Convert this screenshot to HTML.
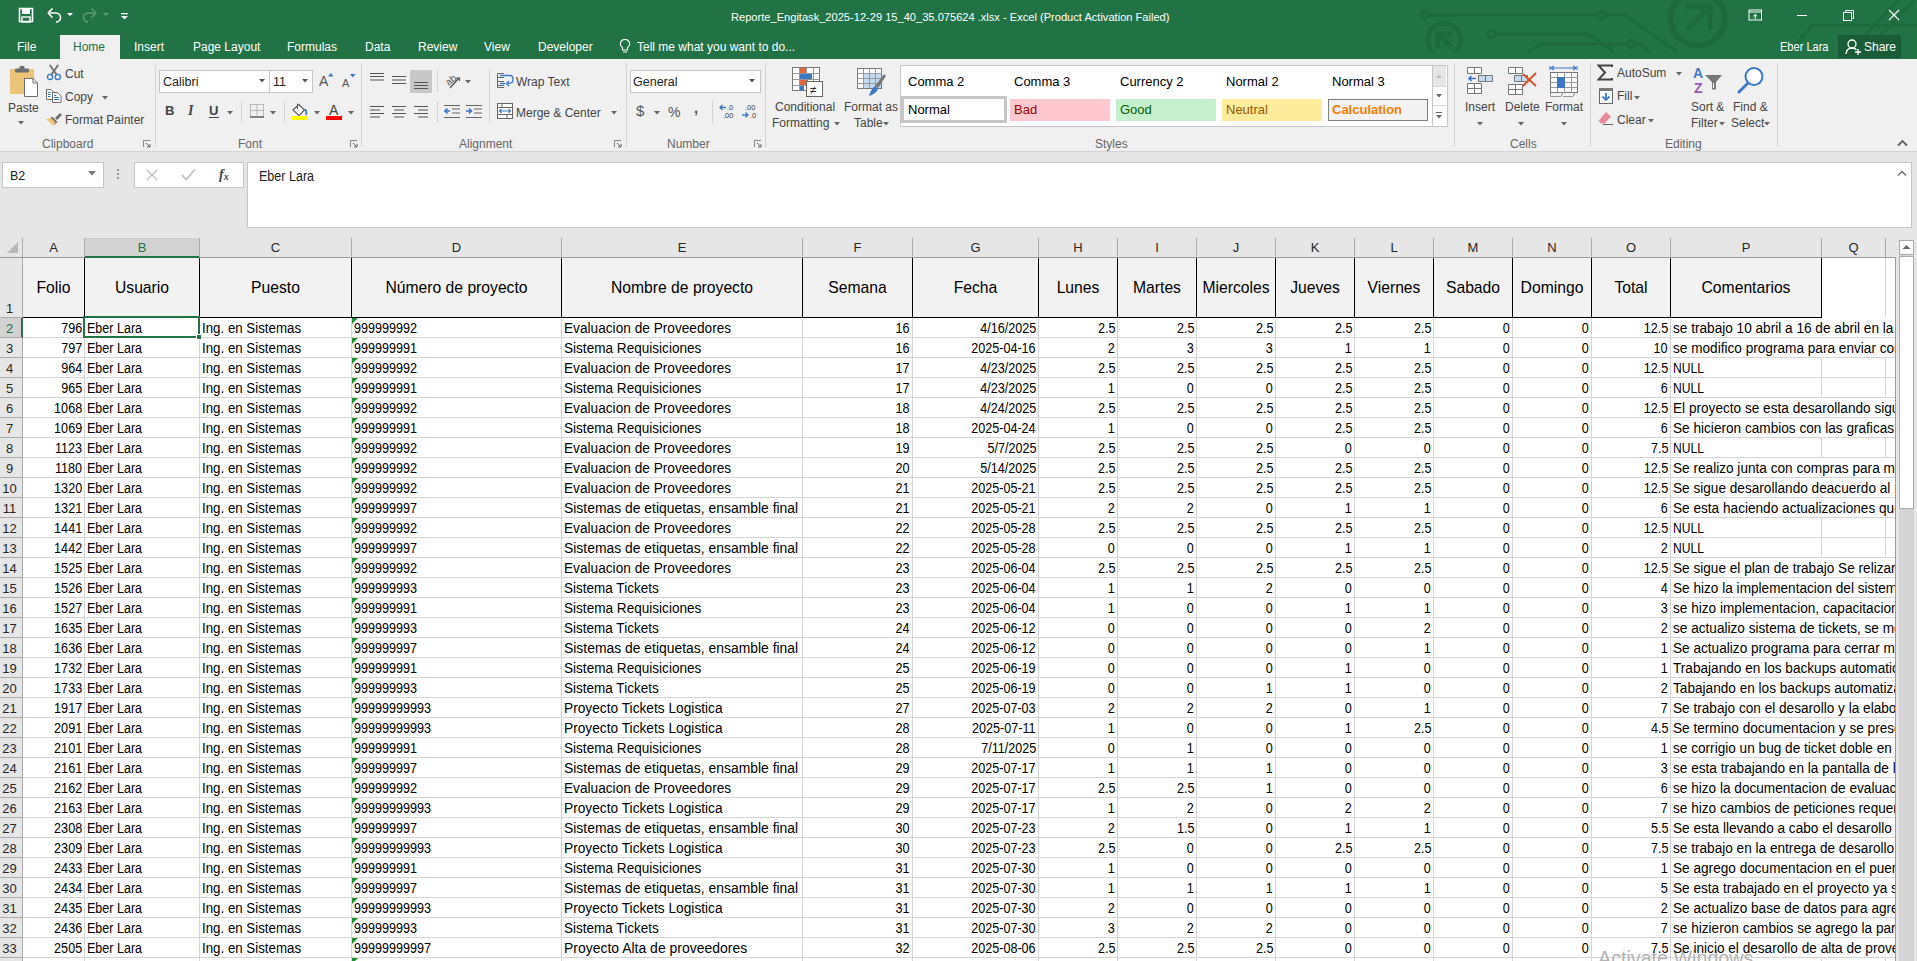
<!DOCTYPE html>
<html><head><meta charset="utf-8">
<style>
*{margin:0;padding:0;box-sizing:content-box}
html,body{width:1917px;height:961px;overflow:hidden;background:#E6E6E6;font-family:"Liberation Sans",sans-serif}
.a{position:absolute}
.t{position:absolute;white-space:nowrap;font-size:12px;line-height:14px;color:#444}
.w{color:#fff}
.c{position:absolute;height:19px;line-height:20px;font-size:14px;color:#000;white-space:nowrap;overflow:visible}
.c span{display:inline-block}
.c.r{text-align:right}
.hl{position:absolute;left:23px;width:1872px;height:1px;background:#D4D4D4}
.vl{position:absolute;width:1px;background:#D4D4D4}
.ch{position:absolute;top:238px;height:19px;line-height:20px;text-align:center;font-size:13px;color:#444}
.rh{position:absolute;left:0;width:19px;text-align:center;font-size:13px}
.hd{position:absolute;top:258px;height:59px;line-height:60px;text-align:center;font-size:15.7px;color:#000;white-space:nowrap}
.tri{position:absolute}
.sep{position:absolute;width:1px;background:#D5D5D5}
.gl{position:absolute;top:137px;font-size:12px;line-height:14px;color:#666;white-space:nowrap}
</style></head><body>
<!-- TITLE BAR -->
<div class="a" style="left:0;top:0;width:1917px;height:59px;background:#217346"></div>
<svg class="a" style="left:1400px;top:0" width="517" height="52">
 <g stroke="#1D6A3F" stroke-width="3" fill="none">
  <path d="M25 15 H225 L277 52"/>
  <circle cx="25" cy="15" r="3.5" fill="#217346"/>
  <circle cx="202" cy="15" r="3.5" fill="#217346"/>
  <path d="M91 34 H188 L214 52"/>
  <circle cx="91" cy="34" r="3.5" fill="#217346"/>
  <path d="M128 52 L141 44 H240 L250 52"/>
  <circle cx="231" cy="44" r="3.5" fill="#217346"/>
  <circle cx="44" cy="40" r="16.5" stroke-width="5"/>
  <path d="M37.5 48 V34 H52 M38 34 L51 47" stroke-width="5"/>
  <circle cx="297.5" cy="18.5" r="27" stroke-width="6"/>
  <path d="M285.5 6.5 H310 V30 M310 6.5 L287 29.5" stroke-width="5"/>
  <path d="M389 52 L413 25 H517"/>
  <path d="M450 52 L498 0"/>
  <path d="M465 52 L514 0"/>
 </g>
</svg>
<!-- QAT -->
<svg class="a" style="left:18px;top:7px" width="16" height="16"><path d="M1.5 1.5 H14.5 V14.5 H1.5 Z" fill="none" stroke="#fff" stroke-width="1.6"/><rect x="4" y="2" width="8" height="5" fill="#fff"/><rect x="4" y="10" width="8" height="5" fill="none" stroke="#fff" stroke-width="1.4"/></svg>
<svg class="a" style="left:46px;top:7px" width="30" height="16"><path d="M3 6 H10 A4.5 4.5 0 0 1 10 15" fill="none" stroke="#fff" stroke-width="1.6"/><path d="M2 6 L6.5 1.5 M2 6 L6.5 10.5" stroke="#fff" stroke-width="1.6" fill="none"/><path d="M21 6 h6 l-3 3z" fill="#fff"/></svg>
<svg class="a" style="left:81px;top:7px" width="30" height="16"><path d="M14 6 H7 A4.5 4.5 0 0 0 7 15" fill="none" stroke="#5C9A76" stroke-width="1.6"/><path d="M15 6 L10.5 1.5 M15 6 L10.5 10.5" stroke="#5C9A76" stroke-width="1.6" fill="none"/><path d="M22 6 h6 l-3 3z" fill="#5C9A76"/></svg>
<svg class="a" style="left:120px;top:12px" width="10" height="10"><rect x="1" y="1" width="7" height="1.3" fill="#fff"/><path d="M1 4 h7 l-3.5 3.5z" fill="#fff"/></svg>
<div class="t w" style="left:731px;top:10px;font-size:11.1px;line-height:14px">Reporte_Engitask_2025-12-29 15_40_35.075624 .xlsx - Excel (Product Activation Failed)</div>
<!-- window controls -->
<svg class="a" style="left:1748px;top:9px" width="15" height="13"><rect x="1" y="1" width="12.5" height="10" fill="none" stroke="#fff" stroke-width="1"/><path d="M1 3 H13.5" stroke="#fff"/><path d="M7.25 10 V5.5 M5.3 7.3 L7.25 5.5 L9.2 7.3" stroke="#fff" fill="none"/></svg>
<div class="a" style="left:1797px;top:15px;width:10px;height:1px;background:#fff"></div>
<svg class="a" style="left:1843px;top:10px" width="11" height="11"><rect x="0.5" y="2.5" width="8" height="8" fill="none" stroke="#fff"/><path d="M2.5 2.5 V0.5 H10.5 V8.5 H8.5" fill="none" stroke="#fff"/></svg>
<svg class="a" style="left:1888px;top:9px" width="12" height="12"><path d="M1 1 L11 11 M11 1 L1 11" stroke="#fff" stroke-width="1.1"/></svg>
<div class="t w" style="left:1780px;top:40px;font-size:12px"><span style="display:inline-block;transform:scaleX(0.92);transform-origin:0 0">Eber Lara</span></div>
<div class="a" style="left:1838px;top:35px;width:63px;height:23px;background:#1A5C37"></div>
<svg class="a" style="left:1845px;top:38px" width="18" height="18"><circle cx="7" cy="6" r="4" fill="none" stroke="#fff" stroke-width="1.3"/><path d="M1 16 C1.5 11 4 10 7 10 C9 10 10.5 10.5 11.5 12" fill="none" stroke="#fff" stroke-width="1.3"/><path d="M13 11 V17 M10 14 H16" stroke="#fff" stroke-width="1.3"/></svg>
<div class="t w" style="left:1864px;top:40px;font-size:12px">Share</div>
<!-- TABS -->
<div class="a" style="left:60px;top:35px;width:60px;height:24px;background:#F0F0F0"></div>
<div class="t w" style="left:17px;top:40px;font-size:12px">File</div>
<div class="t" style="left:73px;top:40px;font-size:12px;color:#217346">Home</div>
<div class="t w" style="left:134px;top:40px;font-size:12px">Insert</div>
<div class="t w" style="left:193px;top:40px;font-size:12px">Page Layout</div>
<div class="t w" style="left:287px;top:40px;font-size:12px">Formulas</div>
<div class="t w" style="left:365px;top:40px;font-size:12px">Data</div>
<div class="t w" style="left:418px;top:40px;font-size:12px">Review</div>
<div class="t w" style="left:484px;top:40px;font-size:12px">View</div>
<div class="t w" style="left:538px;top:40px;font-size:12px">Developer</div>
<svg class="a" style="left:619px;top:38px" width="12" height="16"><path d="M6 1.5 A4.3 4.3 0 0 1 8.5 9.5 V12 H3.5 V9.5 A4.3 4.3 0 0 1 6 1.5 Z" fill="none" stroke="#fff" stroke-width="1.1"/><path d="M4 14 H8" stroke="#fff"/></svg>
<div class="t w" style="left:637px;top:40px;font-size:12px">Tell me what you want to do...</div>
<!-- RIBBON -->
<div class="a" style="left:0;top:59px;width:1917px;height:92px;background:#F0F0F0"></div>
<div class="a" style="left:0;top:151px;width:1917px;height:1px;background:#D4D4D4"></div>
<!-- separators -->
<div class="sep" style="left:155px;top:63px;height:84px"></div>
<div class="sep" style="left:361px;top:63px;height:84px"></div>
<div class="sep" style="left:626px;top:63px;height:84px"></div>
<div class="sep" style="left:765px;top:63px;height:84px"></div>
<div class="sep" style="left:1454px;top:63px;height:84px"></div>
<div class="sep" style="left:1590px;top:63px;height:84px"></div>
<div class="sep" style="left:1777px;top:63px;height:84px"></div>
<!-- group labels -->
<div class="gl" style="left:42px">Clipboard</div>
<div class="gl" style="left:238px">Font</div>
<div class="gl" style="left:459px">Alignment</div>
<div class="gl" style="left:667px">Number</div>
<div class="gl" style="left:1095px">Styles</div>
<div class="gl" style="left:1510px">Cells</div>
<div class="gl" style="left:1665px">Editing</div>
<!-- launchers -->
<svg class="a" style="left:143px;top:140px" width="8" height="8"><path d="M0.5 7 V0.5 H7" fill="none" stroke="#888"/><path d="M3 3 L7 7 M7 4 V7 H4" fill="none" stroke="#666"/></svg>
<svg class="a" style="left:350px;top:140px" width="8" height="8"><path d="M0.5 7 V0.5 H7" fill="none" stroke="#888"/><path d="M3 3 L7 7 M7 4 V7 H4" fill="none" stroke="#666"/></svg>
<svg class="a" style="left:614px;top:140px" width="8" height="8"><path d="M0.5 7 V0.5 H7" fill="none" stroke="#888"/><path d="M3 3 L7 7 M7 4 V7 H4" fill="none" stroke="#666"/></svg>
<svg class="a" style="left:754px;top:140px" width="8" height="8"><path d="M0.5 7 V0.5 H7" fill="none" stroke="#888"/><path d="M3 3 L7 7 M7 4 V7 H4" fill="none" stroke="#666"/></svg>
<!-- CLIPBOARD -->
<svg class="a" style="left:9px;top:66px" width="30" height="32">
 <rect x="1" y="3" width="24" height="25" rx="1" fill="#EBC47A"/>
 <rect x="6" y="2.5" width="14" height="4" rx="1" fill="#6E6E6E"/>
 <rect x="10.5" y="0" width="5" height="4" rx="1" fill="#6E6E6E"/>
 <path d="M15.5 12.5 H24 L28.5 17 V30.5 H15.5 Z" fill="#fff" stroke="#6E6E6E" stroke-width="1"/>
 <path d="M24 12.5 V17 H28.5" fill="none" stroke="#6E6E6E" stroke-width="1"/>
</svg>
<div class="t" style="left:8px;top:101px">Paste</div>
<svg class="a" style="left:18px;top:121px" width="7" height="5"><path d="M0 0 H6 L3 3.5Z" fill="#666"/></svg>
<svg class="a" style="left:45px;top:64px" width="17" height="17"><path d="M5.2 1.5 L11.5 10.5 M12.8 1.5 L6.5 10.5" stroke="#6E6E6E" stroke-width="1.8" stroke-linecap="round"/><circle cx="5" cy="12.9" r="2.6" fill="none" stroke="#3C78C8" stroke-width="1.3"/><circle cx="12.8" cy="12.9" r="2.6" fill="none" stroke="#3C78C8" stroke-width="1.3"/></svg>
<div class="t" style="left:65px;top:67px">Cut</div>
<svg class="a" style="left:45px;top:88px" width="17" height="16"><path d="M1.5 1.5 H6 L8 3.5 V11.5 H1.5 Z" fill="#fff" stroke="#6E6E6E"/><path d="M7.5 4.5 H12.5 L16 8 V14.5 H7.5 Z" fill="#fff" stroke="#6E6E6E"/><path d="M3 4.5 H5.5 M3 6.5 H5.5 M3 8.5 H5.5" stroke="#3C78C8"/><path d="M9 7.5 H11 M9 9.5 H14 M9 11.5 H14" stroke="#3C78C8"/></svg>
<div class="t" style="left:65px;top:90px">Copy</div>
<svg class="a" style="left:102px;top:96px" width="7" height="5"><path d="M0 0 H6 L3 3.5Z" fill="#666"/></svg>
<svg class="a" style="left:45px;top:111px" width="18" height="16"><path d="M10 7 L15 2 L17 4 L12 9 Z" fill="#6E6E6E"/><path d="M7 5.5 L12.5 11 L10 13.5 L4.5 8 Z" fill="#6E6E6E"/><path d="M1 8 L6 7 L10.5 11.5 L8.5 15 Z" fill="#EBC47A"/></svg>
<div class="t" style="left:65px;top:113px">Format Painter</div>
<!-- FONT -->
<div class="a" style="left:159px;top:70px;width:109px;height:21px;background:#fff;border:1px solid #C6C6C6"></div>
<div class="a" style="left:269px;top:70px;width:42px;height:21px;background:#fff;border:1px solid #C6C6C6"></div>
<div class="t" style="left:163px;top:75px;color:#222;font-size:12.5px">Calibri</div>
<div class="t" style="left:273px;top:75px;color:#222;font-size:12.5px">11</div>
<svg class="a" style="left:259px;top:79px" width="7" height="5"><path d="M0 0 H6 L3 3.5Z" fill="#555"/></svg>
<svg class="a" style="left:302px;top:79px" width="7" height="5"><path d="M0 0 H6 L3 3.5Z" fill="#555"/></svg>
<div class="t" style="left:319px;top:73px;font-size:14px;line-height:16px;color:#555">A</div>
<svg class="a" style="left:328px;top:73px" width="6" height="4"><path d="M0 3.5 H5.5 L2.75 0Z" fill="#3C78C8"/></svg>
<div class="t" style="left:342px;top:76px;font-size:11px;line-height:14px;color:#555">A</div>
<svg class="a" style="left:350px;top:74px" width="6" height="4"><path d="M0 0 H5.5 L2.75 3.5Z" fill="#3C78C8"/></svg>
<div class="t" style="left:165px;top:104px;font-size:13px;font-weight:bold;color:#444">B</div>
<div class="t" style="left:188px;top:104px;font-family:'Liberation Serif',serif;font-size:14px;font-style:italic;font-weight:bold;color:#444">I</div>
<div class="t" style="left:209px;top:104px;font-size:13px;font-weight:bold;color:#444">U</div>
<div class="a" style="left:209px;top:117px;width:10px;height:1px;background:#444"></div>
<svg class="a" style="left:227px;top:111px" width="7" height="5"><path d="M0 0 H6 L3 3.5Z" fill="#666"/></svg>
<div class="sep" style="left:241px;top:101px;height:22px"></div>
<svg class="a" style="left:250px;top:104px" width="14" height="14"><path d="M0.5 0.5 H13.5 V12.5 M0.5 0.5 V12.5 M7 0.5 V12.5 M0.5 6.5 H13.5" stroke="#888" stroke-dasharray="1 1" fill="none"/><path d="M0 13 H14" stroke="#444" stroke-width="1.3"/></svg>
<svg class="a" style="left:270px;top:111px" width="7" height="5"><path d="M0 0 H6 L3 3.5Z" fill="#666"/></svg>
<div class="sep" style="left:284px;top:101px;height:22px"></div>
<svg class="a" style="left:292px;top:103px" width="17" height="14"><path d="M1 7 L7 1.5 L12.5 7 L7 12.5 Z" fill="#fff" stroke="#555" stroke-width="1.1"/><path d="M5.5 0.5 V6" stroke="#555"/><path d="M13 6 Q15.5 9 14 12" fill="none" stroke="#3C78C8" stroke-width="1.6"/></svg>
<div class="a" style="left:292px;top:116px;width:16px;height:4px;background:#FFFF00"></div>
<svg class="a" style="left:314px;top:111px" width="7" height="5"><path d="M0 0 H6 L3 3.5Z" fill="#666"/></svg>
<div class="t" style="left:329px;top:103px;font-size:14px;line-height:14px;color:#444">A</div>
<div class="a" style="left:326px;top:116px;width:16px;height:4px;background:#FF0000"></div>
<svg class="a" style="left:348px;top:111px" width="7" height="5"><path d="M0 0 H6 L3 3.5Z" fill="#666"/></svg>
<!-- ALIGNMENT -->
<svg class="a" style="left:370px;top:72px" width="16" height="10"><path d="M0 1.5 H14 M0 4.5 H14 M0 8 H14" stroke="#555" stroke-width="1.1"/></svg>
<svg class="a" style="left:392px;top:75px" width="16" height="10"><path d="M0 1.5 H14 M0 5 H14 M0 8.5 H14" stroke="#555" stroke-width="1.1"/></svg>
<div class="a" style="left:410px;top:70px;width:22px;height:23px;background:#C8C8C8"></div>
<svg class="a" style="left:414px;top:81px" width="16" height="10"><path d="M0 1.5 H14 M0 4.5 H14 M0 7.5 H14" stroke="#555" stroke-width="1.1"/></svg>
<div class="sep" style="left:437px;top:70px;height:22px"></div>
<svg class="a" style="left:444px;top:72px" width="18" height="17"><text x="1" y="12" font-size="10" font-family="Liberation Sans" fill="#555" transform="rotate(-40 6 8)">ab</text><path d="M6 16 L15 6 M12 6 H15.5 V9" stroke="#555" stroke-width="1.2" fill="none"/></svg>
<svg class="a" style="left:465px;top:80px" width="7" height="5"><path d="M0 0 H6 L3 3.5Z" fill="#666"/></svg>
<div class="sep" style="left:489px;top:69px;height:54px"></div>
<svg class="a" style="left:497px;top:72px" width="18" height="17"><path d="M0.5 1.5 H7 M0.5 5.5 H7 M0.5 9.5 H7 M0.5 13.5 H7 M0.5 1.5 V15.5 H7" stroke="#666" fill="none"/><path d="M3 3.5 H13 M3 11.5 H8" stroke="#3C78C8" stroke-width="1.3"/><path d="M13 3.5 Q16 3.5 16 7.5 Q16 11.5 11 11.5" stroke="#3C78C8" stroke-width="1.3" fill="none"/><path d="M12 9 L9.5 11.5 L12 14" stroke="#3C78C8" stroke-width="1.3" fill="none"/></svg>
<div class="t" style="left:516px;top:75px">Wrap Text</div>
<svg class="a" style="left:370px;top:105px" width="16" height="14"><path d="M0 1.5 H14 M0 5 H10 M0 8.5 H14 M0 12 H10" stroke="#555" stroke-width="1.1"/></svg>
<svg class="a" style="left:392px;top:105px" width="16" height="14"><path d="M0 1.5 H14 M2 5 H12 M0 8.5 H14 M2 12 H12" stroke="#555" stroke-width="1.1"/></svg>
<svg class="a" style="left:414px;top:105px" width="16" height="14"><path d="M0 1.5 H14 M4 5 H14 M0 8.5 H14 M4 12 H14" stroke="#555" stroke-width="1.1"/></svg>
<div class="sep" style="left:437px;top:101px;height:22px"></div>
<svg class="a" style="left:444px;top:104px" width="18" height="16"><path d="M0 1.5 H16 M8 5 H16 M8 9 H16 M0 13.5 H16" stroke="#666" stroke-width="1.1"/><path d="M1 7 H6 M3.5 4.5 L1 7 L3.5 9.5" stroke="#3C78C8" stroke-width="1.6" fill="none"/></svg>
<svg class="a" style="left:466px;top:104px" width="18" height="16"><path d="M0 1.5 H16 M8 5 H16 M8 9 H16 M0 13.5 H16" stroke="#666" stroke-width="1.1"/><path d="M0 7 H5.5 M3 4.5 L5.5 7 L3 9.5" stroke="#3C78C8" stroke-width="1.6" fill="none"/></svg>
<svg class="a" style="left:497px;top:103px" width="17" height="17"><rect x="0.5" y="0.5" width="15" height="15" fill="#fff" stroke="#666"/><path d="M0.5 4.5 H15.5 M0.5 11.5 H15.5 M5 0.5 V4.5 M10 11.5 V15.5" stroke="#666" fill="none"/><path d="M2.5 8 H13.5 M4.5 6 L2.5 8 L4.5 10 M11.5 6 L13.5 8 L11.5 10" stroke="#3C78C8" stroke-width="1.1" fill="none"/></svg>
<div class="t" style="left:516px;top:106px">Merge &amp; Center</div>
<svg class="a" style="left:611px;top:111px" width="7" height="5"><path d="M0 0 H6 L3 3.5Z" fill="#666"/></svg>
<!-- NUMBER -->
<div class="a" style="left:630px;top:70px;width:129px;height:21px;background:#fff;border:1px solid #C6C6C6"></div>
<div class="t" style="left:633px;top:75px;color:#222;font-size:12.5px">General</div>
<svg class="a" style="left:749px;top:79px" width="7" height="5"><path d="M0 0 H6 L3 3.5Z" fill="#555"/></svg>
<div class="t" style="left:636px;top:103px;font-size:15px;line-height:16px;color:#555">$</div>
<svg class="a" style="left:654px;top:111px" width="7" height="5"><path d="M0 0 H6 L3 3.5Z" fill="#666"/></svg>
<div class="t" style="left:668px;top:104px;font-size:14px;line-height:16px;color:#555">%</div>
<div class="t" style="left:694px;top:100px;font-size:15px;line-height:16px;font-weight:bold;color:#555">,</div>
<div class="sep" style="left:712px;top:101px;height:22px"></div>
<svg class="a" style="left:719px;top:103px" width="18" height="16"><text x="8" y="7" font-size="7.5" font-family="Liberation Sans" fill="#444">.0</text><text x="4" y="14.5" font-size="7.5" font-family="Liberation Sans" fill="#444">.00</text><path d="M1 4.5 H7 M3.5 2 L1 4.5 L3.5 7" stroke="#3C78C8" stroke-width="1.3" fill="none"/></svg>
<svg class="a" style="left:741px;top:103px" width="18" height="16"><text x="4" y="7" font-size="7.5" font-family="Liberation Sans" fill="#444">.00</text><text x="9" y="14.5" font-size="7.5" font-family="Liberation Sans" fill="#444">.0</text><path d="M1 12 H7 M4.5 9.5 L7 12 L4.5 14.5" stroke="#3C78C8" stroke-width="1.3" fill="none"/></svg>
<!-- STYLES -->
<svg class="a" style="left:791px;top:66px" width="33" height="32">
 <rect x="1.5" y="1.5" width="27" height="23" fill="#fff" stroke="#777"/>
 <path d="M1.5 7.5 H28.5 M1.5 13.5 H28.5 M1.5 19.5 H28.5 M8.5 1.5 V24.5 M15.5 1.5 V24.5 M22.5 1.5 V24.5" stroke="#999"/>
 <rect x="9" y="2" width="6" height="5" fill="#E06A3A"/>
 <rect x="9" y="8" width="12" height="5" fill="#3C78C8"/>
 <rect x="9" y="14" width="8" height="5" fill="#E06A3A"/>
 <rect x="9" y="20" width="4" height="4" fill="#3C78C8"/>
 <rect x="15.5" y="15.5" width="16" height="15" fill="#fff" stroke="#666"/>
 <text x="19" y="28" font-size="12" font-family="Liberation Sans" fill="#333">≠</text>
</svg>
<div class="t" style="left:775px;top:100px">Conditional</div>
<div class="t" style="left:772px;top:116px">Formatting</div>
<svg class="a" style="left:834px;top:122px" width="7" height="5"><path d="M0 0 H6 L3 3.5Z" fill="#666"/></svg>
<svg class="a" style="left:856px;top:67px" width="32" height="31">
 <rect x="1.5" y="1.5" width="24" height="20" fill="#fff" stroke="#777"/>
 <rect x="7" y="6" width="18" height="15" fill="#C5D9F1"/>
 <path d="M1.5 6.5 H25.5 M1.5 11.5 H25.5 M1.5 16.5 H25.5 M7.5 1.5 V21.5 M13.5 1.5 V21.5 M19.5 1.5 V21.5" stroke="#999"/>
 <path d="M30 9 L22 21 L19 19 L28 7 Z" fill="#777"/>
 <path d="M19 19 L22 22 Q20 27 13 29 Q15 22 19 19Z" fill="#3C78C8"/>
</svg>
<div class="t" style="left:844px;top:100px">Format as</div>
<div class="t" style="left:854px;top:116px">Table</div>
<svg class="a" style="left:883px;top:122px" width="7" height="5"><path d="M0 0 H6 L3 3.5Z" fill="#666"/></svg>
<!-- gallery -->
<div class="a" style="left:900px;top:65px;width:546px;height:60px;background:#fff;border:1px solid #C6C6C6"></div>
<div class="t" style="left:908px;top:74px;font-size:13px;line-height:16px;color:#000">Comma 2</div>
<div class="t" style="left:1014px;top:74px;font-size:13px;line-height:16px;color:#000">Comma 3</div>
<div class="t" style="left:1120px;top:74px;font-size:13px;line-height:16px;color:#000">Currency 2</div>
<div class="t" style="left:1226px;top:74px;font-size:13px;line-height:16px;color:#000">Normal 2</div>
<div class="t" style="left:1332px;top:74px;font-size:13px;line-height:16px;color:#000">Normal 3</div>
<div class="a" style="left:901px;top:96px;width:100px;height:21px;background:#fff;border:3px solid #C6C6C6"></div>
<div class="t" style="left:908px;top:102px;font-size:13px;line-height:16px;color:#000">Normal</div>
<div class="a" style="left:1010px;top:99px;width:100px;height:22px;background:#FFC7CE"></div>
<div class="t" style="left:1014px;top:102px;font-size:13px;line-height:16px;color:#9C0006">Bad</div>
<div class="a" style="left:1116px;top:99px;width:100px;height:22px;background:#C6EFCE"></div>
<div class="t" style="left:1120px;top:102px;font-size:13px;line-height:16px;color:#006100">Good</div>
<div class="a" style="left:1222px;top:99px;width:100px;height:22px;background:#FFEB9C"></div>
<div class="t" style="left:1226px;top:102px;font-size:13px;line-height:16px;color:#9C5700">Neutral</div>
<div class="a" style="left:1328px;top:99px;width:98px;height:20px;background:#F2F2F2;border:1px solid #7F7F7F"></div>
<div class="t" style="left:1332px;top:102px;font-size:13px;line-height:16px;color:#FA7D00;font-weight:bold">Calculation</div>
<div class="a" style="left:1432px;top:65px;width:1px;height:62px;background:#C6C6C6"></div>
<div class="a" style="left:1433px;top:66px;width:13px;height:20px;background:#E6E6E6"></div>
<div class="a" style="left:1433px;top:86px;width:13px;height:1px;background:#D4D4D4"></div>
<div class="a" style="left:1433px;top:105px;width:13px;height:1px;background:#D4D4D4"></div>
<svg class="a" style="left:1436px;top:74px" width="7" height="5"><path d="M0 4 H6 L3 0.5Z" fill="#C0C0C0"/></svg>
<svg class="a" style="left:1436px;top:94px" width="7" height="5"><path d="M0 0 H6 L3 3.5Z" fill="#666"/></svg>
<svg class="a" style="left:1436px;top:112px" width="7" height="8"><path d="M0 0.5 H6" stroke="#666"/><path d="M0 3 H6 L3 6.5Z" fill="#666"/></svg>
<!-- CELLS -->
<svg class="a" style="left:1466px;top:66px" width="29" height="29">
 <path d="M1.5 1.5 H15.5 V7.5 H1.5 Z M8.5 1.5 V7.5" fill="#fff" stroke="#777"/>
 <path d="M12.5 9.5 H26.5 V15.5 H12.5 Z M19.5 9.5 V15.5" fill="#C5D9F1" stroke="#777"/>
 <path d="M1.5 17.5 H15.5 V27.5 H1.5 Z M8.5 17.5 V27.5 M1.5 22.5 H15.5" fill="#fff" stroke="#777"/>
 <path d="M3 12.5 H10 M5.5 10 L3 12.5 L5.5 15" stroke="#3C78C8" stroke-width="1.6" fill="none"/>
</svg>
<div class="t" style="left:1465px;top:100px">Insert</div>
<svg class="a" style="left:1477px;top:122px" width="7" height="5"><path d="M0 0 H6 L3 3.5Z" fill="#666"/></svg>
<svg class="a" style="left:1507px;top:66px" width="32" height="30">
 <path d="M1.5 1.5 H15.5 V7.5 H1.5 Z M8.5 1.5 V7.5" fill="#fff" stroke="#777"/>
 <path d="M7.5 9.5 H20.5 V15.5 H7.5 Z M14.5 9.5 V15.5" fill="#C5D9F1" stroke="#777"/>
 <path d="M1.5 18.5 H15.5 V28.5 H1.5 Z M8.5 18.5 V28.5 M1.5 23.5 H15.5" fill="#fff" stroke="#777"/>
 <path d="M16 8 L29 20 M29 7 L16 20" stroke="#D9542B" stroke-width="2"/>
</svg>
<div class="t" style="left:1505px;top:100px">Delete</div>
<svg class="a" style="left:1518px;top:122px" width="7" height="5"><path d="M0 0 H6 L3 3.5Z" fill="#666"/></svg>
<svg class="a" style="left:1549px;top:65px" width="30" height="33">
 <path d="M1 1 V5 M28 1 V5 M2 3 H27 M2 3 L5 1 M2 3 L5 5 M27 3 L24 1 M27 3 L24 5" stroke="#3C78C8" stroke-width="1.1" fill="none"/>
 <rect x="1.5" y="7.5" width="27" height="20" fill="#fff" stroke="#777"/>
 <path d="M1.5 12.5 H28.5 M1.5 17.5 H28.5 M1.5 22.5 H28.5 M8.5 7.5 V27.5 M15.5 7.5 V27.5 M22.5 7.5 V27.5" stroke="#999"/>
 <rect x="8" y="12" width="8" height="11" fill="#3C78C8"/>
 <path d="M1.5 27.5 V31.5 H12 L14 27.5 M14 31.5 H24 L26 27.5" fill="none" stroke="#999"/>
</svg>
<div class="t" style="left:1545px;top:100px">Format</div>
<svg class="a" style="left:1561px;top:122px" width="7" height="5"><path d="M0 0 H6 L3 3.5Z" fill="#666"/></svg>
<!-- EDITING -->
<svg class="a" style="left:1597px;top:64px" width="17" height="17"><path d="M15 3 V1.5 H1.5 L8 8.5 L1.5 15.5 H15 V14" fill="none" stroke="#444" stroke-width="2"/></svg>
<div class="t" style="left:1617px;top:66px">AutoSum</div>
<svg class="a" style="left:1676px;top:72px" width="7" height="5"><path d="M0 0 H6 L3 3.5Z" fill="#666"/></svg>
<svg class="a" style="left:1598px;top:87px" width="16" height="18"><rect x="1.5" y="1.5" width="13" height="15" fill="#fff" stroke="#666"/><rect x="1" y="1" width="14" height="3" fill="#777"/><path d="M8 6 V13 M4.5 9.5 L8 13 L11.5 9.5" stroke="#3C78C8" stroke-width="1.8" fill="none"/></svg>
<div class="t" style="left:1617px;top:89px">Fill</div>
<svg class="a" style="left:1634px;top:96px" width="7" height="5"><path d="M0 0 H6 L3 3.5Z" fill="#666"/></svg>
<svg class="a" style="left:1598px;top:111px" width="17" height="15"><path d="M8 1 L13 5.5 L7 12 L3 12 L1 9.5 Z" fill="#E8899C"/><path d="M1 9.5 L3 12 L7 12" fill="none" stroke="#E8899C"/><path d="M5 13.5 H15" stroke="#666"/></svg>
<div class="t" style="left:1617px;top:113px">Clear</div>
<svg class="a" style="left:1648px;top:119px" width="7" height="5"><path d="M0 0 H6 L3 3.5Z" fill="#666"/></svg>
<div class="t" style="left:1693px;top:66px;font-size:14px;line-height:15px;font-weight:bold;color:#3C78C8">A</div>
<div class="t" style="left:1694px;top:81px;font-size:14px;line-height:15px;font-weight:bold;color:#9B59B6">Z</div>
<svg class="a" style="left:1704px;top:74px" width="19" height="17"><path d="M1 1 H18 L12 8 V15.5 H8 V8 Z" fill="#777"/><path d="M9.5 9 V14" stroke="#fff" stroke-width="1"/></svg>
<div class="t" style="left:1691px;top:100px">Sort &amp;</div>
<div class="t" style="left:1691px;top:116px">Filter</div>
<svg class="a" style="left:1719px;top:122px" width="7" height="5"><path d="M0 0 H6 L3 3.5Z" fill="#666"/></svg>
<svg class="a" style="left:1736px;top:65px" width="30" height="30"><circle cx="18" cy="11.5" r="8.5" fill="#fff" stroke="#3C78C8" stroke-width="2"/><path d="M12 18 L3 27" stroke="#3C78C8" stroke-width="3" stroke-linecap="round"/></svg>
<div class="t" style="left:1733px;top:100px">Find &amp;</div>
<div class="t" style="left:1731px;top:116px">Select</div>
<svg class="a" style="left:1764px;top:122px" width="7" height="5"><path d="M0 0 H6 L3 3.5Z" fill="#666"/></svg>
<svg class="a" style="left:1897px;top:139px" width="11" height="8"><path d="M1 6.5 L5.5 2 L10 6.5" stroke="#666" stroke-width="1.9" fill="none"/></svg>

<!-- FORMULA BAR -->
<div class="a" style="left:2px;top:162px;width:100px;height:24px;background:#fff;border:1px solid #C6C6C6"></div>
<div class="t" style="left:10px;top:169px;font-size:12.5px;color:#222">B2</div>
<svg class="a" style="left:88px;top:171px" width="9" height="6"><path d="M0 0 H8 L4 4.5Z" fill="#777"/></svg>
<svg class="a" style="left:117px;top:168px" width="3" height="14"><rect x="0" y="1" width="2" height="2" fill="#999"/><rect x="0" y="5" width="2" height="2" fill="#999"/><rect x="0" y="9" width="2" height="2" fill="#999"/></svg>
<div class="a" style="left:134px;top:162px;width:108px;height:24px;background:#fff;border:1px solid #C6C6C6"></div>
<svg class="a" style="left:146px;top:169px" width="12" height="12"><path d="M1 1 L11 11 M11 1 L1 11" stroke="#BDBDBD" stroke-width="1.4"/></svg>
<svg class="a" style="left:181px;top:168px" width="15" height="13"><path d="M1 7 L5 11.5 L14 1.5" stroke="#BDBDBD" stroke-width="1.6" fill="none"/></svg>
<div class="t" style="left:219px;top:167px;font-family:'Liberation Serif',serif;font-style:italic;font-weight:bold;font-size:14px;line-height:16px;color:#444">f<span style="font-size:10px;position:relative;top:1px">x</span></div>
<div class="a" style="left:247px;top:162px;width:1663px;height:64px;background:#fff;border:1px solid #C6C6C6"></div>
<div class="a" style="left:259px;top:168px;font-size:14px;line-height:16px;color:#222;white-space:nowrap"><span style="display:inline-block;transform:scaleX(0.895);transform-origin:0 0">Eber Lara</span></div>
<svg class="a" style="left:1897px;top:170px" width="10" height="7"><path d="M1 5.5 L5 1.5 L9 5.5" stroke="#666" stroke-width="1.3" fill="none"/></svg>
<!-- GRID -->
<div style="position:absolute;left:23px;top:258px;width:1872px;height:703px;background:#fff"></div>
<div style="position:absolute;left:23px;top:258px;width:1798px;height:59px;background:#F2F2F2"></div>
<div style="position:absolute;left:0;top:238px;width:1895px;height:19px;background:#E6E6E6"></div>
<div style="position:absolute;left:85px;top:238px;width:114px;height:19px;background:#D2D2D2"></div>
<div style="position:absolute;left:0;top:258px;width:22px;height:703px;background:#E6E6E6"></div>
<div style="position:absolute;left:0;top:318px;width:22px;height:19px;background:#D2D2D2"></div>
<div class="hl" style="top:337px"></div>
<div class="hl" style="top:357px"></div>
<div class="hl" style="top:377px"></div>
<div class="hl" style="top:397px"></div>
<div class="hl" style="top:417px"></div>
<div class="hl" style="top:437px"></div>
<div class="hl" style="top:457px"></div>
<div class="hl" style="top:477px"></div>
<div class="hl" style="top:497px"></div>
<div class="hl" style="top:517px"></div>
<div class="hl" style="top:537px"></div>
<div class="hl" style="top:557px"></div>
<div class="hl" style="top:577px"></div>
<div class="hl" style="top:597px"></div>
<div class="hl" style="top:617px"></div>
<div class="hl" style="top:637px"></div>
<div class="hl" style="top:657px"></div>
<div class="hl" style="top:677px"></div>
<div class="hl" style="top:697px"></div>
<div class="hl" style="top:717px"></div>
<div class="hl" style="top:737px"></div>
<div class="hl" style="top:757px"></div>
<div class="hl" style="top:777px"></div>
<div class="hl" style="top:797px"></div>
<div class="hl" style="top:817px"></div>
<div class="hl" style="top:837px"></div>
<div class="hl" style="top:857px"></div>
<div class="hl" style="top:877px"></div>
<div class="hl" style="top:897px"></div>
<div class="hl" style="top:917px"></div>
<div class="hl" style="top:937px"></div>
<div class="hl" style="top:957px"></div>
<div class="vl" style="left:84px;top:318px;height:643px"></div>
<div class="vl" style="left:199px;top:318px;height:643px"></div>
<div class="vl" style="left:351px;top:318px;height:643px"></div>
<div class="vl" style="left:561px;top:318px;height:643px"></div>
<div class="vl" style="left:802px;top:318px;height:643px"></div>
<div class="vl" style="left:912px;top:318px;height:643px"></div>
<div class="vl" style="left:1038px;top:318px;height:643px"></div>
<div class="vl" style="left:1117px;top:318px;height:643px"></div>
<div class="vl" style="left:1196px;top:318px;height:643px"></div>
<div class="vl" style="left:1275px;top:318px;height:643px"></div>
<div class="vl" style="left:1354px;top:318px;height:643px"></div>
<div class="vl" style="left:1433px;top:318px;height:643px"></div>
<div class="vl" style="left:1512px;top:318px;height:643px"></div>
<div class="vl" style="left:1591px;top:318px;height:643px"></div>
<div class="vl" style="left:1670px;top:318px;height:643px"></div>
<div class="vl" style="left:1821px;top:358px;height:19px"></div>
<div class="vl" style="left:1821px;top:378px;height:19px"></div>
<div class="vl" style="left:1821px;top:438px;height:19px"></div>
<div class="vl" style="left:1821px;top:518px;height:19px"></div>
<div class="vl" style="left:1821px;top:538px;height:19px"></div>
<div class="vl" style="left:1821px;top:958px;height:3px"></div>
<div class="vl" style="left:1885px;top:358px;height:19px"></div>
<div class="vl" style="left:1885px;top:378px;height:19px"></div>
<div class="vl" style="left:1885px;top:438px;height:19px"></div>
<div class="vl" style="left:1885px;top:518px;height:19px"></div>
<div class="vl" style="left:1885px;top:538px;height:19px"></div>
<div class="vl" style="left:1885px;top:958px;height:3px"></div>
<div class="vl" style="left:1885px;top:258px;height:59px"></div>
<div class="a" style="left:1598px;top:948px;font-size:19.7px;line-height:20px;color:#B4B4B4;white-space:nowrap">Activate Windows</div>
<div style="position:absolute;left:22px;top:238px;width:1px;height:19px;background:#ABABAB"></div>
<div style="position:absolute;left:84px;top:238px;width:1px;height:19px;background:#ABABAB"></div>
<div style="position:absolute;left:199px;top:238px;width:1px;height:19px;background:#ABABAB"></div>
<div style="position:absolute;left:351px;top:238px;width:1px;height:19px;background:#ABABAB"></div>
<div style="position:absolute;left:561px;top:238px;width:1px;height:19px;background:#ABABAB"></div>
<div style="position:absolute;left:802px;top:238px;width:1px;height:19px;background:#ABABAB"></div>
<div style="position:absolute;left:912px;top:238px;width:1px;height:19px;background:#ABABAB"></div>
<div style="position:absolute;left:1038px;top:238px;width:1px;height:19px;background:#ABABAB"></div>
<div style="position:absolute;left:1117px;top:238px;width:1px;height:19px;background:#ABABAB"></div>
<div style="position:absolute;left:1196px;top:238px;width:1px;height:19px;background:#ABABAB"></div>
<div style="position:absolute;left:1275px;top:238px;width:1px;height:19px;background:#ABABAB"></div>
<div style="position:absolute;left:1354px;top:238px;width:1px;height:19px;background:#ABABAB"></div>
<div style="position:absolute;left:1433px;top:238px;width:1px;height:19px;background:#ABABAB"></div>
<div style="position:absolute;left:1512px;top:238px;width:1px;height:19px;background:#ABABAB"></div>
<div style="position:absolute;left:1591px;top:238px;width:1px;height:19px;background:#ABABAB"></div>
<div style="position:absolute;left:1670px;top:238px;width:1px;height:19px;background:#ABABAB"></div>
<div style="position:absolute;left:1821px;top:238px;width:1px;height:19px;background:#ABABAB"></div>
<div style="position:absolute;left:1885px;top:238px;width:1px;height:19px;background:#ABABAB"></div>
<div style="position:absolute;left:0;top:257px;width:1895px;height:1px;background:#9B9B9B"></div>
<div style="position:absolute;left:85px;top:256px;width:114px;height:2px;background:#217346"></div>
<div style="position:absolute;left:22px;top:258px;width:1px;height:703px;background:#ABABAB"></div>
<div style="position:absolute;left:21px;top:318px;width:2px;height:20px;background:#217346"></div>
<div style="position:absolute;left:0;top:317px;width:22px;height:1px;background:#ABABAB"></div>
<div style="position:absolute;left:0;top:337px;width:22px;height:1px;background:#ABABAB"></div>
<div style="position:absolute;left:0;top:357px;width:22px;height:1px;background:#ABABAB"></div>
<div style="position:absolute;left:0;top:377px;width:22px;height:1px;background:#ABABAB"></div>
<div style="position:absolute;left:0;top:397px;width:22px;height:1px;background:#ABABAB"></div>
<div style="position:absolute;left:0;top:417px;width:22px;height:1px;background:#ABABAB"></div>
<div style="position:absolute;left:0;top:437px;width:22px;height:1px;background:#ABABAB"></div>
<div style="position:absolute;left:0;top:457px;width:22px;height:1px;background:#ABABAB"></div>
<div style="position:absolute;left:0;top:477px;width:22px;height:1px;background:#ABABAB"></div>
<div style="position:absolute;left:0;top:497px;width:22px;height:1px;background:#ABABAB"></div>
<div style="position:absolute;left:0;top:517px;width:22px;height:1px;background:#ABABAB"></div>
<div style="position:absolute;left:0;top:537px;width:22px;height:1px;background:#ABABAB"></div>
<div style="position:absolute;left:0;top:557px;width:22px;height:1px;background:#ABABAB"></div>
<div style="position:absolute;left:0;top:577px;width:22px;height:1px;background:#ABABAB"></div>
<div style="position:absolute;left:0;top:597px;width:22px;height:1px;background:#ABABAB"></div>
<div style="position:absolute;left:0;top:617px;width:22px;height:1px;background:#ABABAB"></div>
<div style="position:absolute;left:0;top:637px;width:22px;height:1px;background:#ABABAB"></div>
<div style="position:absolute;left:0;top:657px;width:22px;height:1px;background:#ABABAB"></div>
<div style="position:absolute;left:0;top:677px;width:22px;height:1px;background:#ABABAB"></div>
<div style="position:absolute;left:0;top:697px;width:22px;height:1px;background:#ABABAB"></div>
<div style="position:absolute;left:0;top:717px;width:22px;height:1px;background:#ABABAB"></div>
<div style="position:absolute;left:0;top:737px;width:22px;height:1px;background:#ABABAB"></div>
<div style="position:absolute;left:0;top:757px;width:22px;height:1px;background:#ABABAB"></div>
<div style="position:absolute;left:0;top:777px;width:22px;height:1px;background:#ABABAB"></div>
<div style="position:absolute;left:0;top:797px;width:22px;height:1px;background:#ABABAB"></div>
<div style="position:absolute;left:0;top:817px;width:22px;height:1px;background:#ABABAB"></div>
<div style="position:absolute;left:0;top:837px;width:22px;height:1px;background:#ABABAB"></div>
<div style="position:absolute;left:0;top:857px;width:22px;height:1px;background:#ABABAB"></div>
<div style="position:absolute;left:0;top:877px;width:22px;height:1px;background:#ABABAB"></div>
<div style="position:absolute;left:0;top:897px;width:22px;height:1px;background:#ABABAB"></div>
<div style="position:absolute;left:0;top:917px;width:22px;height:1px;background:#ABABAB"></div>
<div style="position:absolute;left:0;top:937px;width:22px;height:1px;background:#ABABAB"></div>
<div style="position:absolute;left:0;top:957px;width:22px;height:1px;background:#ABABAB"></div>
<div style="position:absolute;left:1895px;top:257px;width:1px;height:704px;background:#9B9B9B"></div>
<svg style="position:absolute;left:0;top:238px" width="22" height="19"><polygon points="7,15 18,15 18,4" fill="#B9B9B9"/></svg>
<div style="position:absolute;left:84px;top:258px;width:1px;height:60px;background:#000"></div>
<div style="position:absolute;left:199px;top:258px;width:1px;height:60px;background:#000"></div>
<div style="position:absolute;left:351px;top:258px;width:1px;height:60px;background:#000"></div>
<div style="position:absolute;left:561px;top:258px;width:1px;height:60px;background:#000"></div>
<div style="position:absolute;left:802px;top:258px;width:1px;height:60px;background:#000"></div>
<div style="position:absolute;left:912px;top:258px;width:1px;height:60px;background:#000"></div>
<div style="position:absolute;left:1038px;top:258px;width:1px;height:60px;background:#000"></div>
<div style="position:absolute;left:1117px;top:258px;width:1px;height:60px;background:#000"></div>
<div style="position:absolute;left:1196px;top:258px;width:1px;height:60px;background:#000"></div>
<div style="position:absolute;left:1275px;top:258px;width:1px;height:60px;background:#000"></div>
<div style="position:absolute;left:1354px;top:258px;width:1px;height:60px;background:#000"></div>
<div style="position:absolute;left:1433px;top:258px;width:1px;height:60px;background:#000"></div>
<div style="position:absolute;left:1512px;top:258px;width:1px;height:60px;background:#000"></div>
<div style="position:absolute;left:1591px;top:258px;width:1px;height:60px;background:#000"></div>
<div style="position:absolute;left:1670px;top:258px;width:1px;height:60px;background:#000"></div>
<div style="position:absolute;left:1821px;top:258px;width:1px;height:60px;background:#000"></div>
<div style="position:absolute;left:23px;top:317px;width:1799px;height:1px;background:#000"></div>
<div class="ch" style="left:23px;width:61px;color:#262626">A</div>
<div class="ch" style="left:85px;width:114px;color:#217346">B</div>
<div class="ch" style="left:200px;width:151px;color:#262626">C</div>
<div class="ch" style="left:352px;width:209px;color:#262626">D</div>
<div class="ch" style="left:562px;width:240px;color:#262626">E</div>
<div class="ch" style="left:803px;width:109px;color:#262626">F</div>
<div class="ch" style="left:913px;width:125px;color:#262626">G</div>
<div class="ch" style="left:1039px;width:78px;color:#262626">H</div>
<div class="ch" style="left:1118px;width:78px;color:#262626">I</div>
<div class="ch" style="left:1197px;width:78px;color:#262626">J</div>
<div class="ch" style="left:1276px;width:78px;color:#262626">K</div>
<div class="ch" style="left:1355px;width:78px;color:#262626">L</div>
<div class="ch" style="left:1434px;width:78px;color:#262626">M</div>
<div class="ch" style="left:1513px;width:78px;color:#262626">N</div>
<div class="ch" style="left:1592px;width:78px;color:#262626">O</div>
<div class="ch" style="left:1671px;width:150px;color:#262626">P</div>
<div class="ch" style="left:1822px;width:63px;color:#262626">Q</div>
<div class="rh" style="top:258px;height:59px;line-height:0px;color:#262626"></div>
<div class="rh" style="top:318px;height:19px;line-height:21px;color:#217346">2</div>
<div class="rh" style="top:338px;height:19px;line-height:21px;color:#262626">3</div>
<div class="rh" style="top:358px;height:19px;line-height:21px;color:#262626">4</div>
<div class="rh" style="top:378px;height:19px;line-height:21px;color:#262626">5</div>
<div class="rh" style="top:398px;height:19px;line-height:21px;color:#262626">6</div>
<div class="rh" style="top:418px;height:19px;line-height:21px;color:#262626">7</div>
<div class="rh" style="top:438px;height:19px;line-height:21px;color:#262626">8</div>
<div class="rh" style="top:458px;height:19px;line-height:21px;color:#262626">9</div>
<div class="rh" style="top:478px;height:19px;line-height:21px;color:#262626">10</div>
<div class="rh" style="top:498px;height:19px;line-height:21px;color:#262626">11</div>
<div class="rh" style="top:518px;height:19px;line-height:21px;color:#262626">12</div>
<div class="rh" style="top:538px;height:19px;line-height:21px;color:#262626">13</div>
<div class="rh" style="top:558px;height:19px;line-height:21px;color:#262626">14</div>
<div class="rh" style="top:578px;height:19px;line-height:21px;color:#262626">15</div>
<div class="rh" style="top:598px;height:19px;line-height:21px;color:#262626">16</div>
<div class="rh" style="top:618px;height:19px;line-height:21px;color:#262626">17</div>
<div class="rh" style="top:638px;height:19px;line-height:21px;color:#262626">18</div>
<div class="rh" style="top:658px;height:19px;line-height:21px;color:#262626">19</div>
<div class="rh" style="top:678px;height:19px;line-height:21px;color:#262626">20</div>
<div class="rh" style="top:698px;height:19px;line-height:21px;color:#262626">21</div>
<div class="rh" style="top:718px;height:19px;line-height:21px;color:#262626">22</div>
<div class="rh" style="top:738px;height:19px;line-height:21px;color:#262626">23</div>
<div class="rh" style="top:758px;height:19px;line-height:21px;color:#262626">24</div>
<div class="rh" style="top:778px;height:19px;line-height:21px;color:#262626">25</div>
<div class="rh" style="top:798px;height:19px;line-height:21px;color:#262626">26</div>
<div class="rh" style="top:818px;height:19px;line-height:21px;color:#262626">27</div>
<div class="rh" style="top:838px;height:19px;line-height:21px;color:#262626">28</div>
<div class="rh" style="top:858px;height:19px;line-height:21px;color:#262626">29</div>
<div class="rh" style="top:878px;height:19px;line-height:21px;color:#262626">30</div>
<div class="rh" style="top:898px;height:19px;line-height:21px;color:#262626">31</div>
<div class="rh" style="top:918px;height:19px;line-height:21px;color:#262626">32</div>
<div class="rh" style="top:938px;height:19px;line-height:21px;color:#262626">33</div>
<div class="rh" style="top:958px;height:19px;line-height:21px;color:#262626">34</div>
<div class="rh" style="top:300px;height:17px;line-height:17px;color:#262626">1</div>
<div class="hd" style="left:23px;width:61px">Folio</div>
<div class="hd" style="left:85px;width:114px">Usuario</div>
<div class="hd" style="left:200px;width:151px">Puesto</div>
<div class="hd" style="left:352px;width:209px">Número de proyecto</div>
<div class="hd" style="left:562px;width:240px">Nombre de proyecto</div>
<div class="hd" style="left:803px;width:109px">Semana</div>
<div class="hd" style="left:913px;width:125px">Fecha</div>
<div class="hd" style="left:1039px;width:78px">Lunes</div>
<div class="hd" style="left:1118px;width:78px">Martes</div>
<div class="hd" style="left:1197px;width:78px">Miercoles</div>
<div class="hd" style="left:1276px;width:78px">Jueves</div>
<div class="hd" style="left:1355px;width:78px">Viernes</div>
<div class="hd" style="left:1434px;width:78px">Sabado</div>
<div class="hd" style="left:1513px;width:78px">Domingo</div>
<div class="hd" style="left:1592px;width:78px">Total</div>
<div class="hd" style="left:1671px;width:150px">Comentarios</div>
<div class="c r" style="left:23px;top:318px;width:59px"><span style="transform:scaleX(0.9);transform-origin:100% 0">796</span></div>
<div class="c" style="left:87px;top:318px;width:112px"><span style="transform:scaleX(0.895);transform-origin:0 0">Eber Lara</span></div>
<div class="c" style="left:202px;top:318px;width:149px"><span style="transform:scaleX(0.95);transform-origin:0 0">Ing. en Sistemas</span></div>
<div class="c" style="left:354px;top:318px;width:207px"><span style="transform:scaleX(0.9);transform-origin:0 0">999999992</span></div>
<svg class="tri" style="left:352px;top:318px" width="6" height="6"><polygon points="0,0 6,0 0,6" fill="#1E8F2E"/></svg>
<div class="c" style="left:564px;top:318px;width:238px"><span style="transform:scaleX(0.976);transform-origin:0 0">Evaluacion de Proveedores</span></div>
<div class="c r" style="left:803px;top:318px;width:107px"><span style="transform:scaleX(0.9);transform-origin:100% 0">16</span></div>
<div class="c r" style="left:913px;top:318px;width:123px"><span style="transform:scaleX(0.9);transform-origin:100% 0">4/16/2025</span></div>
<div class="c r" style="left:1039px;top:318px;width:76px"><span style="transform:scaleX(0.9);transform-origin:100% 0">2.5</span></div>
<div class="c r" style="left:1118px;top:318px;width:76px"><span style="transform:scaleX(0.9);transform-origin:100% 0">2.5</span></div>
<div class="c r" style="left:1197px;top:318px;width:76px"><span style="transform:scaleX(0.9);transform-origin:100% 0">2.5</span></div>
<div class="c r" style="left:1276px;top:318px;width:76px"><span style="transform:scaleX(0.9);transform-origin:100% 0">2.5</span></div>
<div class="c r" style="left:1355px;top:318px;width:76px"><span style="transform:scaleX(0.9);transform-origin:100% 0">2.5</span></div>
<div class="c r" style="left:1434px;top:318px;width:76px"><span style="transform:scaleX(0.9);transform-origin:100% 0">0</span></div>
<div class="c r" style="left:1513px;top:318px;width:76px"><span style="transform:scaleX(0.9);transform-origin:100% 0">0</span></div>
<div class="c r" style="left:1592px;top:318px;width:76px"><span style="transform:scaleX(0.9);transform-origin:100% 0">12.5</span></div>
<div class="c" style="left:1673px;top:318px;width:222px;overflow:hidden"><span style="transform:scaleX(0.973);transform-origin:0 0">se trabajo 10 abril a 16 de abril en la plataforma</span></div>
<div class="c r" style="left:23px;top:338px;width:59px"><span style="transform:scaleX(0.9);transform-origin:100% 0">797</span></div>
<div class="c" style="left:87px;top:338px;width:112px"><span style="transform:scaleX(0.895);transform-origin:0 0">Eber Lara</span></div>
<div class="c" style="left:202px;top:338px;width:149px"><span style="transform:scaleX(0.95);transform-origin:0 0">Ing. en Sistemas</span></div>
<div class="c" style="left:354px;top:338px;width:207px"><span style="transform:scaleX(0.9);transform-origin:0 0">999999991</span></div>
<svg class="tri" style="left:352px;top:338px" width="6" height="6"><polygon points="0,0 6,0 0,6" fill="#1E8F2E"/></svg>
<div class="c" style="left:564px;top:338px;width:238px"><span style="transform:scaleX(0.97);transform-origin:0 0">Sistema Requisiciones</span></div>
<div class="c r" style="left:803px;top:338px;width:107px"><span style="transform:scaleX(0.9);transform-origin:100% 0">16</span></div>
<div class="c r" style="left:913px;top:338px;width:123px"><span style="transform:scaleX(0.9);transform-origin:100% 0">2025-04-16</span></div>
<div class="c r" style="left:1039px;top:338px;width:76px"><span style="transform:scaleX(0.9);transform-origin:100% 0">2</span></div>
<div class="c r" style="left:1118px;top:338px;width:76px"><span style="transform:scaleX(0.9);transform-origin:100% 0">3</span></div>
<div class="c r" style="left:1197px;top:338px;width:76px"><span style="transform:scaleX(0.9);transform-origin:100% 0">3</span></div>
<div class="c r" style="left:1276px;top:338px;width:76px"><span style="transform:scaleX(0.9);transform-origin:100% 0">1</span></div>
<div class="c r" style="left:1355px;top:338px;width:76px"><span style="transform:scaleX(0.9);transform-origin:100% 0">1</span></div>
<div class="c r" style="left:1434px;top:338px;width:76px"><span style="transform:scaleX(0.9);transform-origin:100% 0">0</span></div>
<div class="c r" style="left:1513px;top:338px;width:76px"><span style="transform:scaleX(0.9);transform-origin:100% 0">0</span></div>
<div class="c r" style="left:1592px;top:338px;width:76px"><span style="transform:scaleX(0.9);transform-origin:100% 0">10</span></div>
<div class="c" style="left:1673px;top:338px;width:222px;overflow:hidden"><span style="transform:scaleX(0.973);transform-origin:0 0">se modifico programa para enviar correos</span></div>
<div class="c r" style="left:23px;top:358px;width:59px"><span style="transform:scaleX(0.9);transform-origin:100% 0">964</span></div>
<div class="c" style="left:87px;top:358px;width:112px"><span style="transform:scaleX(0.895);transform-origin:0 0">Eber Lara</span></div>
<div class="c" style="left:202px;top:358px;width:149px"><span style="transform:scaleX(0.95);transform-origin:0 0">Ing. en Sistemas</span></div>
<div class="c" style="left:354px;top:358px;width:207px"><span style="transform:scaleX(0.9);transform-origin:0 0">999999992</span></div>
<svg class="tri" style="left:352px;top:358px" width="6" height="6"><polygon points="0,0 6,0 0,6" fill="#1E8F2E"/></svg>
<div class="c" style="left:564px;top:358px;width:238px"><span style="transform:scaleX(0.976);transform-origin:0 0">Evaluacion de Proveedores</span></div>
<div class="c r" style="left:803px;top:358px;width:107px"><span style="transform:scaleX(0.9);transform-origin:100% 0">17</span></div>
<div class="c r" style="left:913px;top:358px;width:123px"><span style="transform:scaleX(0.9);transform-origin:100% 0">4/23/2025</span></div>
<div class="c r" style="left:1039px;top:358px;width:76px"><span style="transform:scaleX(0.9);transform-origin:100% 0">2.5</span></div>
<div class="c r" style="left:1118px;top:358px;width:76px"><span style="transform:scaleX(0.9);transform-origin:100% 0">2.5</span></div>
<div class="c r" style="left:1197px;top:358px;width:76px"><span style="transform:scaleX(0.9);transform-origin:100% 0">2.5</span></div>
<div class="c r" style="left:1276px;top:358px;width:76px"><span style="transform:scaleX(0.9);transform-origin:100% 0">2.5</span></div>
<div class="c r" style="left:1355px;top:358px;width:76px"><span style="transform:scaleX(0.9);transform-origin:100% 0">2.5</span></div>
<div class="c r" style="left:1434px;top:358px;width:76px"><span style="transform:scaleX(0.9);transform-origin:100% 0">0</span></div>
<div class="c r" style="left:1513px;top:358px;width:76px"><span style="transform:scaleX(0.9);transform-origin:100% 0">0</span></div>
<div class="c r" style="left:1592px;top:358px;width:76px"><span style="transform:scaleX(0.9);transform-origin:100% 0">12.5</span></div>
<div class="c" style="left:1673px;top:358px;width:222px;overflow:hidden"><span style="transform:scaleX(0.864);transform-origin:0 0">NULL</span></div>
<div class="c r" style="left:23px;top:378px;width:59px"><span style="transform:scaleX(0.9);transform-origin:100% 0">965</span></div>
<div class="c" style="left:87px;top:378px;width:112px"><span style="transform:scaleX(0.895);transform-origin:0 0">Eber Lara</span></div>
<div class="c" style="left:202px;top:378px;width:149px"><span style="transform:scaleX(0.95);transform-origin:0 0">Ing. en Sistemas</span></div>
<div class="c" style="left:354px;top:378px;width:207px"><span style="transform:scaleX(0.9);transform-origin:0 0">999999991</span></div>
<svg class="tri" style="left:352px;top:378px" width="6" height="6"><polygon points="0,0 6,0 0,6" fill="#1E8F2E"/></svg>
<div class="c" style="left:564px;top:378px;width:238px"><span style="transform:scaleX(0.97);transform-origin:0 0">Sistema Requisiciones</span></div>
<div class="c r" style="left:803px;top:378px;width:107px"><span style="transform:scaleX(0.9);transform-origin:100% 0">17</span></div>
<div class="c r" style="left:913px;top:378px;width:123px"><span style="transform:scaleX(0.9);transform-origin:100% 0">4/23/2025</span></div>
<div class="c r" style="left:1039px;top:378px;width:76px"><span style="transform:scaleX(0.9);transform-origin:100% 0">1</span></div>
<div class="c r" style="left:1118px;top:378px;width:76px"><span style="transform:scaleX(0.9);transform-origin:100% 0">0</span></div>
<div class="c r" style="left:1197px;top:378px;width:76px"><span style="transform:scaleX(0.9);transform-origin:100% 0">0</span></div>
<div class="c r" style="left:1276px;top:378px;width:76px"><span style="transform:scaleX(0.9);transform-origin:100% 0">2.5</span></div>
<div class="c r" style="left:1355px;top:378px;width:76px"><span style="transform:scaleX(0.9);transform-origin:100% 0">2.5</span></div>
<div class="c r" style="left:1434px;top:378px;width:76px"><span style="transform:scaleX(0.9);transform-origin:100% 0">0</span></div>
<div class="c r" style="left:1513px;top:378px;width:76px"><span style="transform:scaleX(0.9);transform-origin:100% 0">0</span></div>
<div class="c r" style="left:1592px;top:378px;width:76px"><span style="transform:scaleX(0.9);transform-origin:100% 0">6</span></div>
<div class="c" style="left:1673px;top:378px;width:222px;overflow:hidden"><span style="transform:scaleX(0.864);transform-origin:0 0">NULL</span></div>
<div class="c r" style="left:23px;top:398px;width:59px"><span style="transform:scaleX(0.9);transform-origin:100% 0">1068</span></div>
<div class="c" style="left:87px;top:398px;width:112px"><span style="transform:scaleX(0.895);transform-origin:0 0">Eber Lara</span></div>
<div class="c" style="left:202px;top:398px;width:149px"><span style="transform:scaleX(0.95);transform-origin:0 0">Ing. en Sistemas</span></div>
<div class="c" style="left:354px;top:398px;width:207px"><span style="transform:scaleX(0.9);transform-origin:0 0">999999992</span></div>
<svg class="tri" style="left:352px;top:398px" width="6" height="6"><polygon points="0,0 6,0 0,6" fill="#1E8F2E"/></svg>
<div class="c" style="left:564px;top:398px;width:238px"><span style="transform:scaleX(0.976);transform-origin:0 0">Evaluacion de Proveedores</span></div>
<div class="c r" style="left:803px;top:398px;width:107px"><span style="transform:scaleX(0.9);transform-origin:100% 0">18</span></div>
<div class="c r" style="left:913px;top:398px;width:123px"><span style="transform:scaleX(0.9);transform-origin:100% 0">4/24/2025</span></div>
<div class="c r" style="left:1039px;top:398px;width:76px"><span style="transform:scaleX(0.9);transform-origin:100% 0">2.5</span></div>
<div class="c r" style="left:1118px;top:398px;width:76px"><span style="transform:scaleX(0.9);transform-origin:100% 0">2.5</span></div>
<div class="c r" style="left:1197px;top:398px;width:76px"><span style="transform:scaleX(0.9);transform-origin:100% 0">2.5</span></div>
<div class="c r" style="left:1276px;top:398px;width:76px"><span style="transform:scaleX(0.9);transform-origin:100% 0">2.5</span></div>
<div class="c r" style="left:1355px;top:398px;width:76px"><span style="transform:scaleX(0.9);transform-origin:100% 0">2.5</span></div>
<div class="c r" style="left:1434px;top:398px;width:76px"><span style="transform:scaleX(0.9);transform-origin:100% 0">0</span></div>
<div class="c r" style="left:1513px;top:398px;width:76px"><span style="transform:scaleX(0.9);transform-origin:100% 0">0</span></div>
<div class="c r" style="left:1592px;top:398px;width:76px"><span style="transform:scaleX(0.9);transform-origin:100% 0">12.5</span></div>
<div class="c" style="left:1673px;top:398px;width:222px;overflow:hidden"><span style="transform:scaleX(0.973);transform-origin:0 0">El proyecto se esta desarollando siguiendo</span></div>
<div class="c r" style="left:23px;top:418px;width:59px"><span style="transform:scaleX(0.9);transform-origin:100% 0">1069</span></div>
<div class="c" style="left:87px;top:418px;width:112px"><span style="transform:scaleX(0.895);transform-origin:0 0">Eber Lara</span></div>
<div class="c" style="left:202px;top:418px;width:149px"><span style="transform:scaleX(0.95);transform-origin:0 0">Ing. en Sistemas</span></div>
<div class="c" style="left:354px;top:418px;width:207px"><span style="transform:scaleX(0.9);transform-origin:0 0">999999991</span></div>
<svg class="tri" style="left:352px;top:418px" width="6" height="6"><polygon points="0,0 6,0 0,6" fill="#1E8F2E"/></svg>
<div class="c" style="left:564px;top:418px;width:238px"><span style="transform:scaleX(0.97);transform-origin:0 0">Sistema Requisiciones</span></div>
<div class="c r" style="left:803px;top:418px;width:107px"><span style="transform:scaleX(0.9);transform-origin:100% 0">18</span></div>
<div class="c r" style="left:913px;top:418px;width:123px"><span style="transform:scaleX(0.9);transform-origin:100% 0">2025-04-24</span></div>
<div class="c r" style="left:1039px;top:418px;width:76px"><span style="transform:scaleX(0.9);transform-origin:100% 0">1</span></div>
<div class="c r" style="left:1118px;top:418px;width:76px"><span style="transform:scaleX(0.9);transform-origin:100% 0">0</span></div>
<div class="c r" style="left:1197px;top:418px;width:76px"><span style="transform:scaleX(0.9);transform-origin:100% 0">0</span></div>
<div class="c r" style="left:1276px;top:418px;width:76px"><span style="transform:scaleX(0.9);transform-origin:100% 0">2.5</span></div>
<div class="c r" style="left:1355px;top:418px;width:76px"><span style="transform:scaleX(0.9);transform-origin:100% 0">2.5</span></div>
<div class="c r" style="left:1434px;top:418px;width:76px"><span style="transform:scaleX(0.9);transform-origin:100% 0">0</span></div>
<div class="c r" style="left:1513px;top:418px;width:76px"><span style="transform:scaleX(0.9);transform-origin:100% 0">0</span></div>
<div class="c r" style="left:1592px;top:418px;width:76px"><span style="transform:scaleX(0.9);transform-origin:100% 0">6</span></div>
<div class="c" style="left:1673px;top:418px;width:222px;overflow:hidden"><span style="transform:scaleX(0.973);transform-origin:0 0">Se hicieron cambios con las graficas y</span></div>
<div class="c r" style="left:23px;top:438px;width:59px"><span style="transform:scaleX(0.9);transform-origin:100% 0">1123</span></div>
<div class="c" style="left:87px;top:438px;width:112px"><span style="transform:scaleX(0.895);transform-origin:0 0">Eber Lara</span></div>
<div class="c" style="left:202px;top:438px;width:149px"><span style="transform:scaleX(0.95);transform-origin:0 0">Ing. en Sistemas</span></div>
<div class="c" style="left:354px;top:438px;width:207px"><span style="transform:scaleX(0.9);transform-origin:0 0">999999992</span></div>
<svg class="tri" style="left:352px;top:438px" width="6" height="6"><polygon points="0,0 6,0 0,6" fill="#1E8F2E"/></svg>
<div class="c" style="left:564px;top:438px;width:238px"><span style="transform:scaleX(0.976);transform-origin:0 0">Evaluacion de Proveedores</span></div>
<div class="c r" style="left:803px;top:438px;width:107px"><span style="transform:scaleX(0.9);transform-origin:100% 0">19</span></div>
<div class="c r" style="left:913px;top:438px;width:123px"><span style="transform:scaleX(0.9);transform-origin:100% 0">5/7/2025</span></div>
<div class="c r" style="left:1039px;top:438px;width:76px"><span style="transform:scaleX(0.9);transform-origin:100% 0">2.5</span></div>
<div class="c r" style="left:1118px;top:438px;width:76px"><span style="transform:scaleX(0.9);transform-origin:100% 0">2.5</span></div>
<div class="c r" style="left:1197px;top:438px;width:76px"><span style="transform:scaleX(0.9);transform-origin:100% 0">2.5</span></div>
<div class="c r" style="left:1276px;top:438px;width:76px"><span style="transform:scaleX(0.9);transform-origin:100% 0">0</span></div>
<div class="c r" style="left:1355px;top:438px;width:76px"><span style="transform:scaleX(0.9);transform-origin:100% 0">0</span></div>
<div class="c r" style="left:1434px;top:438px;width:76px"><span style="transform:scaleX(0.9);transform-origin:100% 0">0</span></div>
<div class="c r" style="left:1513px;top:438px;width:76px"><span style="transform:scaleX(0.9);transform-origin:100% 0">0</span></div>
<div class="c r" style="left:1592px;top:438px;width:76px"><span style="transform:scaleX(0.9);transform-origin:100% 0">7.5</span></div>
<div class="c" style="left:1673px;top:438px;width:222px;overflow:hidden"><span style="transform:scaleX(0.864);transform-origin:0 0">NULL</span></div>
<div class="c r" style="left:23px;top:458px;width:59px"><span style="transform:scaleX(0.9);transform-origin:100% 0">1180</span></div>
<div class="c" style="left:87px;top:458px;width:112px"><span style="transform:scaleX(0.895);transform-origin:0 0">Eber Lara</span></div>
<div class="c" style="left:202px;top:458px;width:149px"><span style="transform:scaleX(0.95);transform-origin:0 0">Ing. en Sistemas</span></div>
<div class="c" style="left:354px;top:458px;width:207px"><span style="transform:scaleX(0.9);transform-origin:0 0">999999992</span></div>
<svg class="tri" style="left:352px;top:458px" width="6" height="6"><polygon points="0,0 6,0 0,6" fill="#1E8F2E"/></svg>
<div class="c" style="left:564px;top:458px;width:238px"><span style="transform:scaleX(0.976);transform-origin:0 0">Evaluacion de Proveedores</span></div>
<div class="c r" style="left:803px;top:458px;width:107px"><span style="transform:scaleX(0.9);transform-origin:100% 0">20</span></div>
<div class="c r" style="left:913px;top:458px;width:123px"><span style="transform:scaleX(0.9);transform-origin:100% 0">5/14/2025</span></div>
<div class="c r" style="left:1039px;top:458px;width:76px"><span style="transform:scaleX(0.9);transform-origin:100% 0">2.5</span></div>
<div class="c r" style="left:1118px;top:458px;width:76px"><span style="transform:scaleX(0.9);transform-origin:100% 0">2.5</span></div>
<div class="c r" style="left:1197px;top:458px;width:76px"><span style="transform:scaleX(0.9);transform-origin:100% 0">2.5</span></div>
<div class="c r" style="left:1276px;top:458px;width:76px"><span style="transform:scaleX(0.9);transform-origin:100% 0">2.5</span></div>
<div class="c r" style="left:1355px;top:458px;width:76px"><span style="transform:scaleX(0.9);transform-origin:100% 0">2.5</span></div>
<div class="c r" style="left:1434px;top:458px;width:76px"><span style="transform:scaleX(0.9);transform-origin:100% 0">0</span></div>
<div class="c r" style="left:1513px;top:458px;width:76px"><span style="transform:scaleX(0.9);transform-origin:100% 0">0</span></div>
<div class="c r" style="left:1592px;top:458px;width:76px"><span style="transform:scaleX(0.9);transform-origin:100% 0">12.5</span></div>
<div class="c" style="left:1673px;top:458px;width:222px;overflow:hidden"><span style="transform:scaleX(0.973);transform-origin:0 0">Se realizo junta con compras para mejorar</span></div>
<div class="c r" style="left:23px;top:478px;width:59px"><span style="transform:scaleX(0.9);transform-origin:100% 0">1320</span></div>
<div class="c" style="left:87px;top:478px;width:112px"><span style="transform:scaleX(0.895);transform-origin:0 0">Eber Lara</span></div>
<div class="c" style="left:202px;top:478px;width:149px"><span style="transform:scaleX(0.95);transform-origin:0 0">Ing. en Sistemas</span></div>
<div class="c" style="left:354px;top:478px;width:207px"><span style="transform:scaleX(0.9);transform-origin:0 0">999999992</span></div>
<svg class="tri" style="left:352px;top:478px" width="6" height="6"><polygon points="0,0 6,0 0,6" fill="#1E8F2E"/></svg>
<div class="c" style="left:564px;top:478px;width:238px"><span style="transform:scaleX(0.976);transform-origin:0 0">Evaluacion de Proveedores</span></div>
<div class="c r" style="left:803px;top:478px;width:107px"><span style="transform:scaleX(0.9);transform-origin:100% 0">21</span></div>
<div class="c r" style="left:913px;top:478px;width:123px"><span style="transform:scaleX(0.9);transform-origin:100% 0">2025-05-21</span></div>
<div class="c r" style="left:1039px;top:478px;width:76px"><span style="transform:scaleX(0.9);transform-origin:100% 0">2.5</span></div>
<div class="c r" style="left:1118px;top:478px;width:76px"><span style="transform:scaleX(0.9);transform-origin:100% 0">2.5</span></div>
<div class="c r" style="left:1197px;top:478px;width:76px"><span style="transform:scaleX(0.9);transform-origin:100% 0">2.5</span></div>
<div class="c r" style="left:1276px;top:478px;width:76px"><span style="transform:scaleX(0.9);transform-origin:100% 0">2.5</span></div>
<div class="c r" style="left:1355px;top:478px;width:76px"><span style="transform:scaleX(0.9);transform-origin:100% 0">2.5</span></div>
<div class="c r" style="left:1434px;top:478px;width:76px"><span style="transform:scaleX(0.9);transform-origin:100% 0">0</span></div>
<div class="c r" style="left:1513px;top:478px;width:76px"><span style="transform:scaleX(0.9);transform-origin:100% 0">0</span></div>
<div class="c r" style="left:1592px;top:478px;width:76px"><span style="transform:scaleX(0.9);transform-origin:100% 0">12.5</span></div>
<div class="c" style="left:1673px;top:478px;width:222px;overflow:hidden"><span style="transform:scaleX(0.973);transform-origin:0 0">Se sigue desarollando deacuerdo al plan</span></div>
<div class="c r" style="left:23px;top:498px;width:59px"><span style="transform:scaleX(0.9);transform-origin:100% 0">1321</span></div>
<div class="c" style="left:87px;top:498px;width:112px"><span style="transform:scaleX(0.895);transform-origin:0 0">Eber Lara</span></div>
<div class="c" style="left:202px;top:498px;width:149px"><span style="transform:scaleX(0.95);transform-origin:0 0">Ing. en Sistemas</span></div>
<div class="c" style="left:354px;top:498px;width:207px"><span style="transform:scaleX(0.9);transform-origin:0 0">999999997</span></div>
<svg class="tri" style="left:352px;top:498px" width="6" height="6"><polygon points="0,0 6,0 0,6" fill="#1E8F2E"/></svg>
<div class="c" style="left:564px;top:498px;width:238px"><span style="transform:scaleX(0.993);transform-origin:0 0">Sistemas de etiquetas, ensamble final</span></div>
<div class="c r" style="left:803px;top:498px;width:107px"><span style="transform:scaleX(0.9);transform-origin:100% 0">21</span></div>
<div class="c r" style="left:913px;top:498px;width:123px"><span style="transform:scaleX(0.9);transform-origin:100% 0">2025-05-21</span></div>
<div class="c r" style="left:1039px;top:498px;width:76px"><span style="transform:scaleX(0.9);transform-origin:100% 0">2</span></div>
<div class="c r" style="left:1118px;top:498px;width:76px"><span style="transform:scaleX(0.9);transform-origin:100% 0">2</span></div>
<div class="c r" style="left:1197px;top:498px;width:76px"><span style="transform:scaleX(0.9);transform-origin:100% 0">0</span></div>
<div class="c r" style="left:1276px;top:498px;width:76px"><span style="transform:scaleX(0.9);transform-origin:100% 0">1</span></div>
<div class="c r" style="left:1355px;top:498px;width:76px"><span style="transform:scaleX(0.9);transform-origin:100% 0">1</span></div>
<div class="c r" style="left:1434px;top:498px;width:76px"><span style="transform:scaleX(0.9);transform-origin:100% 0">0</span></div>
<div class="c r" style="left:1513px;top:498px;width:76px"><span style="transform:scaleX(0.9);transform-origin:100% 0">0</span></div>
<div class="c r" style="left:1592px;top:498px;width:76px"><span style="transform:scaleX(0.9);transform-origin:100% 0">6</span></div>
<div class="c" style="left:1673px;top:498px;width:222px;overflow:hidden"><span style="transform:scaleX(0.973);transform-origin:0 0">Se esta haciendo actualizaciones que</span></div>
<div class="c r" style="left:23px;top:518px;width:59px"><span style="transform:scaleX(0.9);transform-origin:100% 0">1441</span></div>
<div class="c" style="left:87px;top:518px;width:112px"><span style="transform:scaleX(0.895);transform-origin:0 0">Eber Lara</span></div>
<div class="c" style="left:202px;top:518px;width:149px"><span style="transform:scaleX(0.95);transform-origin:0 0">Ing. en Sistemas</span></div>
<div class="c" style="left:354px;top:518px;width:207px"><span style="transform:scaleX(0.9);transform-origin:0 0">999999992</span></div>
<svg class="tri" style="left:352px;top:518px" width="6" height="6"><polygon points="0,0 6,0 0,6" fill="#1E8F2E"/></svg>
<div class="c" style="left:564px;top:518px;width:238px"><span style="transform:scaleX(0.976);transform-origin:0 0">Evaluacion de Proveedores</span></div>
<div class="c r" style="left:803px;top:518px;width:107px"><span style="transform:scaleX(0.9);transform-origin:100% 0">22</span></div>
<div class="c r" style="left:913px;top:518px;width:123px"><span style="transform:scaleX(0.9);transform-origin:100% 0">2025-05-28</span></div>
<div class="c r" style="left:1039px;top:518px;width:76px"><span style="transform:scaleX(0.9);transform-origin:100% 0">2.5</span></div>
<div class="c r" style="left:1118px;top:518px;width:76px"><span style="transform:scaleX(0.9);transform-origin:100% 0">2.5</span></div>
<div class="c r" style="left:1197px;top:518px;width:76px"><span style="transform:scaleX(0.9);transform-origin:100% 0">2.5</span></div>
<div class="c r" style="left:1276px;top:518px;width:76px"><span style="transform:scaleX(0.9);transform-origin:100% 0">2.5</span></div>
<div class="c r" style="left:1355px;top:518px;width:76px"><span style="transform:scaleX(0.9);transform-origin:100% 0">2.5</span></div>
<div class="c r" style="left:1434px;top:518px;width:76px"><span style="transform:scaleX(0.9);transform-origin:100% 0">0</span></div>
<div class="c r" style="left:1513px;top:518px;width:76px"><span style="transform:scaleX(0.9);transform-origin:100% 0">0</span></div>
<div class="c r" style="left:1592px;top:518px;width:76px"><span style="transform:scaleX(0.9);transform-origin:100% 0">12.5</span></div>
<div class="c" style="left:1673px;top:518px;width:222px;overflow:hidden"><span style="transform:scaleX(0.864);transform-origin:0 0">NULL</span></div>
<div class="c r" style="left:23px;top:538px;width:59px"><span style="transform:scaleX(0.9);transform-origin:100% 0">1442</span></div>
<div class="c" style="left:87px;top:538px;width:112px"><span style="transform:scaleX(0.895);transform-origin:0 0">Eber Lara</span></div>
<div class="c" style="left:202px;top:538px;width:149px"><span style="transform:scaleX(0.95);transform-origin:0 0">Ing. en Sistemas</span></div>
<div class="c" style="left:354px;top:538px;width:207px"><span style="transform:scaleX(0.9);transform-origin:0 0">999999997</span></div>
<svg class="tri" style="left:352px;top:538px" width="6" height="6"><polygon points="0,0 6,0 0,6" fill="#1E8F2E"/></svg>
<div class="c" style="left:564px;top:538px;width:238px"><span style="transform:scaleX(0.993);transform-origin:0 0">Sistemas de etiquetas, ensamble final</span></div>
<div class="c r" style="left:803px;top:538px;width:107px"><span style="transform:scaleX(0.9);transform-origin:100% 0">22</span></div>
<div class="c r" style="left:913px;top:538px;width:123px"><span style="transform:scaleX(0.9);transform-origin:100% 0">2025-05-28</span></div>
<div class="c r" style="left:1039px;top:538px;width:76px"><span style="transform:scaleX(0.9);transform-origin:100% 0">0</span></div>
<div class="c r" style="left:1118px;top:538px;width:76px"><span style="transform:scaleX(0.9);transform-origin:100% 0">0</span></div>
<div class="c r" style="left:1197px;top:538px;width:76px"><span style="transform:scaleX(0.9);transform-origin:100% 0">0</span></div>
<div class="c r" style="left:1276px;top:538px;width:76px"><span style="transform:scaleX(0.9);transform-origin:100% 0">1</span></div>
<div class="c r" style="left:1355px;top:538px;width:76px"><span style="transform:scaleX(0.9);transform-origin:100% 0">1</span></div>
<div class="c r" style="left:1434px;top:538px;width:76px"><span style="transform:scaleX(0.9);transform-origin:100% 0">0</span></div>
<div class="c r" style="left:1513px;top:538px;width:76px"><span style="transform:scaleX(0.9);transform-origin:100% 0">0</span></div>
<div class="c r" style="left:1592px;top:538px;width:76px"><span style="transform:scaleX(0.9);transform-origin:100% 0">2</span></div>
<div class="c" style="left:1673px;top:538px;width:222px;overflow:hidden"><span style="transform:scaleX(0.864);transform-origin:0 0">NULL</span></div>
<div class="c r" style="left:23px;top:558px;width:59px"><span style="transform:scaleX(0.9);transform-origin:100% 0">1525</span></div>
<div class="c" style="left:87px;top:558px;width:112px"><span style="transform:scaleX(0.895);transform-origin:0 0">Eber Lara</span></div>
<div class="c" style="left:202px;top:558px;width:149px"><span style="transform:scaleX(0.95);transform-origin:0 0">Ing. en Sistemas</span></div>
<div class="c" style="left:354px;top:558px;width:207px"><span style="transform:scaleX(0.9);transform-origin:0 0">999999992</span></div>
<svg class="tri" style="left:352px;top:558px" width="6" height="6"><polygon points="0,0 6,0 0,6" fill="#1E8F2E"/></svg>
<div class="c" style="left:564px;top:558px;width:238px"><span style="transform:scaleX(0.976);transform-origin:0 0">Evaluacion de Proveedores</span></div>
<div class="c r" style="left:803px;top:558px;width:107px"><span style="transform:scaleX(0.9);transform-origin:100% 0">23</span></div>
<div class="c r" style="left:913px;top:558px;width:123px"><span style="transform:scaleX(0.9);transform-origin:100% 0">2025-06-04</span></div>
<div class="c r" style="left:1039px;top:558px;width:76px"><span style="transform:scaleX(0.9);transform-origin:100% 0">2.5</span></div>
<div class="c r" style="left:1118px;top:558px;width:76px"><span style="transform:scaleX(0.9);transform-origin:100% 0">2.5</span></div>
<div class="c r" style="left:1197px;top:558px;width:76px"><span style="transform:scaleX(0.9);transform-origin:100% 0">2.5</span></div>
<div class="c r" style="left:1276px;top:558px;width:76px"><span style="transform:scaleX(0.9);transform-origin:100% 0">2.5</span></div>
<div class="c r" style="left:1355px;top:558px;width:76px"><span style="transform:scaleX(0.9);transform-origin:100% 0">2.5</span></div>
<div class="c r" style="left:1434px;top:558px;width:76px"><span style="transform:scaleX(0.9);transform-origin:100% 0">0</span></div>
<div class="c r" style="left:1513px;top:558px;width:76px"><span style="transform:scaleX(0.9);transform-origin:100% 0">0</span></div>
<div class="c r" style="left:1592px;top:558px;width:76px"><span style="transform:scaleX(0.9);transform-origin:100% 0">12.5</span></div>
<div class="c" style="left:1673px;top:558px;width:222px;overflow:hidden"><span style="transform:scaleX(0.973);transform-origin:0 0">Se sigue el plan de trabajo Se relizaron</span></div>
<div class="c r" style="left:23px;top:578px;width:59px"><span style="transform:scaleX(0.9);transform-origin:100% 0">1526</span></div>
<div class="c" style="left:87px;top:578px;width:112px"><span style="transform:scaleX(0.895);transform-origin:0 0">Eber Lara</span></div>
<div class="c" style="left:202px;top:578px;width:149px"><span style="transform:scaleX(0.95);transform-origin:0 0">Ing. en Sistemas</span></div>
<div class="c" style="left:354px;top:578px;width:207px"><span style="transform:scaleX(0.9);transform-origin:0 0">999999993</span></div>
<svg class="tri" style="left:352px;top:578px" width="6" height="6"><polygon points="0,0 6,0 0,6" fill="#1E8F2E"/></svg>
<div class="c" style="left:564px;top:578px;width:238px"><span style="transform:scaleX(0.966);transform-origin:0 0">Sistema Tickets</span></div>
<div class="c r" style="left:803px;top:578px;width:107px"><span style="transform:scaleX(0.9);transform-origin:100% 0">23</span></div>
<div class="c r" style="left:913px;top:578px;width:123px"><span style="transform:scaleX(0.9);transform-origin:100% 0">2025-06-04</span></div>
<div class="c r" style="left:1039px;top:578px;width:76px"><span style="transform:scaleX(0.9);transform-origin:100% 0">1</span></div>
<div class="c r" style="left:1118px;top:578px;width:76px"><span style="transform:scaleX(0.9);transform-origin:100% 0">1</span></div>
<div class="c r" style="left:1197px;top:578px;width:76px"><span style="transform:scaleX(0.9);transform-origin:100% 0">2</span></div>
<div class="c r" style="left:1276px;top:578px;width:76px"><span style="transform:scaleX(0.9);transform-origin:100% 0">0</span></div>
<div class="c r" style="left:1355px;top:578px;width:76px"><span style="transform:scaleX(0.9);transform-origin:100% 0">0</span></div>
<div class="c r" style="left:1434px;top:578px;width:76px"><span style="transform:scaleX(0.9);transform-origin:100% 0">0</span></div>
<div class="c r" style="left:1513px;top:578px;width:76px"><span style="transform:scaleX(0.9);transform-origin:100% 0">0</span></div>
<div class="c r" style="left:1592px;top:578px;width:76px"><span style="transform:scaleX(0.9);transform-origin:100% 0">4</span></div>
<div class="c" style="left:1673px;top:578px;width:222px;overflow:hidden"><span style="transform:scaleX(0.973);transform-origin:0 0">Se hizo la implementacion del sistema</span></div>
<div class="c r" style="left:23px;top:598px;width:59px"><span style="transform:scaleX(0.9);transform-origin:100% 0">1527</span></div>
<div class="c" style="left:87px;top:598px;width:112px"><span style="transform:scaleX(0.895);transform-origin:0 0">Eber Lara</span></div>
<div class="c" style="left:202px;top:598px;width:149px"><span style="transform:scaleX(0.95);transform-origin:0 0">Ing. en Sistemas</span></div>
<div class="c" style="left:354px;top:598px;width:207px"><span style="transform:scaleX(0.9);transform-origin:0 0">999999991</span></div>
<svg class="tri" style="left:352px;top:598px" width="6" height="6"><polygon points="0,0 6,0 0,6" fill="#1E8F2E"/></svg>
<div class="c" style="left:564px;top:598px;width:238px"><span style="transform:scaleX(0.97);transform-origin:0 0">Sistema Requisiciones</span></div>
<div class="c r" style="left:803px;top:598px;width:107px"><span style="transform:scaleX(0.9);transform-origin:100% 0">23</span></div>
<div class="c r" style="left:913px;top:598px;width:123px"><span style="transform:scaleX(0.9);transform-origin:100% 0">2025-06-04</span></div>
<div class="c r" style="left:1039px;top:598px;width:76px"><span style="transform:scaleX(0.9);transform-origin:100% 0">1</span></div>
<div class="c r" style="left:1118px;top:598px;width:76px"><span style="transform:scaleX(0.9);transform-origin:100% 0">0</span></div>
<div class="c r" style="left:1197px;top:598px;width:76px"><span style="transform:scaleX(0.9);transform-origin:100% 0">0</span></div>
<div class="c r" style="left:1276px;top:598px;width:76px"><span style="transform:scaleX(0.9);transform-origin:100% 0">1</span></div>
<div class="c r" style="left:1355px;top:598px;width:76px"><span style="transform:scaleX(0.9);transform-origin:100% 0">1</span></div>
<div class="c r" style="left:1434px;top:598px;width:76px"><span style="transform:scaleX(0.9);transform-origin:100% 0">0</span></div>
<div class="c r" style="left:1513px;top:598px;width:76px"><span style="transform:scaleX(0.9);transform-origin:100% 0">0</span></div>
<div class="c r" style="left:1592px;top:598px;width:76px"><span style="transform:scaleX(0.9);transform-origin:100% 0">3</span></div>
<div class="c" style="left:1673px;top:598px;width:222px;overflow:hidden"><span style="transform:scaleX(0.973);transform-origin:0 0">se hizo implementacion, capacitacion</span></div>
<div class="c r" style="left:23px;top:618px;width:59px"><span style="transform:scaleX(0.9);transform-origin:100% 0">1635</span></div>
<div class="c" style="left:87px;top:618px;width:112px"><span style="transform:scaleX(0.895);transform-origin:0 0">Eber Lara</span></div>
<div class="c" style="left:202px;top:618px;width:149px"><span style="transform:scaleX(0.95);transform-origin:0 0">Ing. en Sistemas</span></div>
<div class="c" style="left:354px;top:618px;width:207px"><span style="transform:scaleX(0.9);transform-origin:0 0">999999993</span></div>
<svg class="tri" style="left:352px;top:618px" width="6" height="6"><polygon points="0,0 6,0 0,6" fill="#1E8F2E"/></svg>
<div class="c" style="left:564px;top:618px;width:238px"><span style="transform:scaleX(0.966);transform-origin:0 0">Sistema Tickets</span></div>
<div class="c r" style="left:803px;top:618px;width:107px"><span style="transform:scaleX(0.9);transform-origin:100% 0">24</span></div>
<div class="c r" style="left:913px;top:618px;width:123px"><span style="transform:scaleX(0.9);transform-origin:100% 0">2025-06-12</span></div>
<div class="c r" style="left:1039px;top:618px;width:76px"><span style="transform:scaleX(0.9);transform-origin:100% 0">0</span></div>
<div class="c r" style="left:1118px;top:618px;width:76px"><span style="transform:scaleX(0.9);transform-origin:100% 0">0</span></div>
<div class="c r" style="left:1197px;top:618px;width:76px"><span style="transform:scaleX(0.9);transform-origin:100% 0">0</span></div>
<div class="c r" style="left:1276px;top:618px;width:76px"><span style="transform:scaleX(0.9);transform-origin:100% 0">0</span></div>
<div class="c r" style="left:1355px;top:618px;width:76px"><span style="transform:scaleX(0.9);transform-origin:100% 0">2</span></div>
<div class="c r" style="left:1434px;top:618px;width:76px"><span style="transform:scaleX(0.9);transform-origin:100% 0">0</span></div>
<div class="c r" style="left:1513px;top:618px;width:76px"><span style="transform:scaleX(0.9);transform-origin:100% 0">0</span></div>
<div class="c r" style="left:1592px;top:618px;width:76px"><span style="transform:scaleX(0.9);transform-origin:100% 0">2</span></div>
<div class="c" style="left:1673px;top:618px;width:222px;overflow:hidden"><span style="transform:scaleX(0.973);transform-origin:0 0">se actualizo sistema de tickets, se mejoro</span></div>
<div class="c r" style="left:23px;top:638px;width:59px"><span style="transform:scaleX(0.9);transform-origin:100% 0">1636</span></div>
<div class="c" style="left:87px;top:638px;width:112px"><span style="transform:scaleX(0.895);transform-origin:0 0">Eber Lara</span></div>
<div class="c" style="left:202px;top:638px;width:149px"><span style="transform:scaleX(0.95);transform-origin:0 0">Ing. en Sistemas</span></div>
<div class="c" style="left:354px;top:638px;width:207px"><span style="transform:scaleX(0.9);transform-origin:0 0">999999997</span></div>
<svg class="tri" style="left:352px;top:638px" width="6" height="6"><polygon points="0,0 6,0 0,6" fill="#1E8F2E"/></svg>
<div class="c" style="left:564px;top:638px;width:238px"><span style="transform:scaleX(0.993);transform-origin:0 0">Sistemas de etiquetas, ensamble final</span></div>
<div class="c r" style="left:803px;top:638px;width:107px"><span style="transform:scaleX(0.9);transform-origin:100% 0">24</span></div>
<div class="c r" style="left:913px;top:638px;width:123px"><span style="transform:scaleX(0.9);transform-origin:100% 0">2025-06-12</span></div>
<div class="c r" style="left:1039px;top:638px;width:76px"><span style="transform:scaleX(0.9);transform-origin:100% 0">0</span></div>
<div class="c r" style="left:1118px;top:638px;width:76px"><span style="transform:scaleX(0.9);transform-origin:100% 0">0</span></div>
<div class="c r" style="left:1197px;top:638px;width:76px"><span style="transform:scaleX(0.9);transform-origin:100% 0">0</span></div>
<div class="c r" style="left:1276px;top:638px;width:76px"><span style="transform:scaleX(0.9);transform-origin:100% 0">0</span></div>
<div class="c r" style="left:1355px;top:638px;width:76px"><span style="transform:scaleX(0.9);transform-origin:100% 0">1</span></div>
<div class="c r" style="left:1434px;top:638px;width:76px"><span style="transform:scaleX(0.9);transform-origin:100% 0">0</span></div>
<div class="c r" style="left:1513px;top:638px;width:76px"><span style="transform:scaleX(0.9);transform-origin:100% 0">0</span></div>
<div class="c r" style="left:1592px;top:638px;width:76px"><span style="transform:scaleX(0.9);transform-origin:100% 0">1</span></div>
<div class="c" style="left:1673px;top:638px;width:222px;overflow:hidden"><span style="transform:scaleX(0.973);transform-origin:0 0">Se actualizo programa para cerrar mi</span></div>
<div class="c r" style="left:23px;top:658px;width:59px"><span style="transform:scaleX(0.9);transform-origin:100% 0">1732</span></div>
<div class="c" style="left:87px;top:658px;width:112px"><span style="transform:scaleX(0.895);transform-origin:0 0">Eber Lara</span></div>
<div class="c" style="left:202px;top:658px;width:149px"><span style="transform:scaleX(0.95);transform-origin:0 0">Ing. en Sistemas</span></div>
<div class="c" style="left:354px;top:658px;width:207px"><span style="transform:scaleX(0.9);transform-origin:0 0">999999991</span></div>
<svg class="tri" style="left:352px;top:658px" width="6" height="6"><polygon points="0,0 6,0 0,6" fill="#1E8F2E"/></svg>
<div class="c" style="left:564px;top:658px;width:238px"><span style="transform:scaleX(0.97);transform-origin:0 0">Sistema Requisiciones</span></div>
<div class="c r" style="left:803px;top:658px;width:107px"><span style="transform:scaleX(0.9);transform-origin:100% 0">25</span></div>
<div class="c r" style="left:913px;top:658px;width:123px"><span style="transform:scaleX(0.9);transform-origin:100% 0">2025-06-19</span></div>
<div class="c r" style="left:1039px;top:658px;width:76px"><span style="transform:scaleX(0.9);transform-origin:100% 0">0</span></div>
<div class="c r" style="left:1118px;top:658px;width:76px"><span style="transform:scaleX(0.9);transform-origin:100% 0">0</span></div>
<div class="c r" style="left:1197px;top:658px;width:76px"><span style="transform:scaleX(0.9);transform-origin:100% 0">0</span></div>
<div class="c r" style="left:1276px;top:658px;width:76px"><span style="transform:scaleX(0.9);transform-origin:100% 0">1</span></div>
<div class="c r" style="left:1355px;top:658px;width:76px"><span style="transform:scaleX(0.9);transform-origin:100% 0">0</span></div>
<div class="c r" style="left:1434px;top:658px;width:76px"><span style="transform:scaleX(0.9);transform-origin:100% 0">0</span></div>
<div class="c r" style="left:1513px;top:658px;width:76px"><span style="transform:scaleX(0.9);transform-origin:100% 0">0</span></div>
<div class="c r" style="left:1592px;top:658px;width:76px"><span style="transform:scaleX(0.9);transform-origin:100% 0">1</span></div>
<div class="c" style="left:1673px;top:658px;width:222px;overflow:hidden"><span style="transform:scaleX(0.973);transform-origin:0 0">Trabajando en los backups automaticos</span></div>
<div class="c r" style="left:23px;top:678px;width:59px"><span style="transform:scaleX(0.9);transform-origin:100% 0">1733</span></div>
<div class="c" style="left:87px;top:678px;width:112px"><span style="transform:scaleX(0.895);transform-origin:0 0">Eber Lara</span></div>
<div class="c" style="left:202px;top:678px;width:149px"><span style="transform:scaleX(0.95);transform-origin:0 0">Ing. en Sistemas</span></div>
<div class="c" style="left:354px;top:678px;width:207px"><span style="transform:scaleX(0.9);transform-origin:0 0">999999993</span></div>
<svg class="tri" style="left:352px;top:678px" width="6" height="6"><polygon points="0,0 6,0 0,6" fill="#1E8F2E"/></svg>
<div class="c" style="left:564px;top:678px;width:238px"><span style="transform:scaleX(0.966);transform-origin:0 0">Sistema Tickets</span></div>
<div class="c r" style="left:803px;top:678px;width:107px"><span style="transform:scaleX(0.9);transform-origin:100% 0">25</span></div>
<div class="c r" style="left:913px;top:678px;width:123px"><span style="transform:scaleX(0.9);transform-origin:100% 0">2025-06-19</span></div>
<div class="c r" style="left:1039px;top:678px;width:76px"><span style="transform:scaleX(0.9);transform-origin:100% 0">0</span></div>
<div class="c r" style="left:1118px;top:678px;width:76px"><span style="transform:scaleX(0.9);transform-origin:100% 0">0</span></div>
<div class="c r" style="left:1197px;top:678px;width:76px"><span style="transform:scaleX(0.9);transform-origin:100% 0">1</span></div>
<div class="c r" style="left:1276px;top:678px;width:76px"><span style="transform:scaleX(0.9);transform-origin:100% 0">1</span></div>
<div class="c r" style="left:1355px;top:678px;width:76px"><span style="transform:scaleX(0.9);transform-origin:100% 0">0</span></div>
<div class="c r" style="left:1434px;top:678px;width:76px"><span style="transform:scaleX(0.9);transform-origin:100% 0">0</span></div>
<div class="c r" style="left:1513px;top:678px;width:76px"><span style="transform:scaleX(0.9);transform-origin:100% 0">0</span></div>
<div class="c r" style="left:1592px;top:678px;width:76px"><span style="transform:scaleX(0.9);transform-origin:100% 0">2</span></div>
<div class="c" style="left:1673px;top:678px;width:222px;overflow:hidden"><span style="transform:scaleX(0.973);transform-origin:0 0">Tabajando en los backups automatizados</span></div>
<div class="c r" style="left:23px;top:698px;width:59px"><span style="transform:scaleX(0.9);transform-origin:100% 0">1917</span></div>
<div class="c" style="left:87px;top:698px;width:112px"><span style="transform:scaleX(0.895);transform-origin:0 0">Eber Lara</span></div>
<div class="c" style="left:202px;top:698px;width:149px"><span style="transform:scaleX(0.95);transform-origin:0 0">Ing. en Sistemas</span></div>
<div class="c" style="left:354px;top:698px;width:207px"><span style="transform:scaleX(0.9);transform-origin:0 0">99999999993</span></div>
<svg class="tri" style="left:352px;top:698px" width="6" height="6"><polygon points="0,0 6,0 0,6" fill="#1E8F2E"/></svg>
<div class="c" style="left:564px;top:698px;width:238px"><span style="transform:scaleX(0.98);transform-origin:0 0">Proyecto Tickets Logistica</span></div>
<div class="c r" style="left:803px;top:698px;width:107px"><span style="transform:scaleX(0.9);transform-origin:100% 0">27</span></div>
<div class="c r" style="left:913px;top:698px;width:123px"><span style="transform:scaleX(0.9);transform-origin:100% 0">2025-07-03</span></div>
<div class="c r" style="left:1039px;top:698px;width:76px"><span style="transform:scaleX(0.9);transform-origin:100% 0">2</span></div>
<div class="c r" style="left:1118px;top:698px;width:76px"><span style="transform:scaleX(0.9);transform-origin:100% 0">2</span></div>
<div class="c r" style="left:1197px;top:698px;width:76px"><span style="transform:scaleX(0.9);transform-origin:100% 0">2</span></div>
<div class="c r" style="left:1276px;top:698px;width:76px"><span style="transform:scaleX(0.9);transform-origin:100% 0">0</span></div>
<div class="c r" style="left:1355px;top:698px;width:76px"><span style="transform:scaleX(0.9);transform-origin:100% 0">1</span></div>
<div class="c r" style="left:1434px;top:698px;width:76px"><span style="transform:scaleX(0.9);transform-origin:100% 0">0</span></div>
<div class="c r" style="left:1513px;top:698px;width:76px"><span style="transform:scaleX(0.9);transform-origin:100% 0">0</span></div>
<div class="c r" style="left:1592px;top:698px;width:76px"><span style="transform:scaleX(0.9);transform-origin:100% 0">7</span></div>
<div class="c" style="left:1673px;top:698px;width:222px;overflow:hidden"><span style="transform:scaleX(0.973);transform-origin:0 0">Se trabajo con el desarollo y la elaboracion</span></div>
<div class="c r" style="left:23px;top:718px;width:59px"><span style="transform:scaleX(0.9);transform-origin:100% 0">2091</span></div>
<div class="c" style="left:87px;top:718px;width:112px"><span style="transform:scaleX(0.895);transform-origin:0 0">Eber Lara</span></div>
<div class="c" style="left:202px;top:718px;width:149px"><span style="transform:scaleX(0.95);transform-origin:0 0">Ing. en Sistemas</span></div>
<div class="c" style="left:354px;top:718px;width:207px"><span style="transform:scaleX(0.9);transform-origin:0 0">99999999993</span></div>
<svg class="tri" style="left:352px;top:718px" width="6" height="6"><polygon points="0,0 6,0 0,6" fill="#1E8F2E"/></svg>
<div class="c" style="left:564px;top:718px;width:238px"><span style="transform:scaleX(0.98);transform-origin:0 0">Proyecto Tickets Logistica</span></div>
<div class="c r" style="left:803px;top:718px;width:107px"><span style="transform:scaleX(0.9);transform-origin:100% 0">28</span></div>
<div class="c r" style="left:913px;top:718px;width:123px"><span style="transform:scaleX(0.9);transform-origin:100% 0">2025-07-11</span></div>
<div class="c r" style="left:1039px;top:718px;width:76px"><span style="transform:scaleX(0.9);transform-origin:100% 0">1</span></div>
<div class="c r" style="left:1118px;top:718px;width:76px"><span style="transform:scaleX(0.9);transform-origin:100% 0">0</span></div>
<div class="c r" style="left:1197px;top:718px;width:76px"><span style="transform:scaleX(0.9);transform-origin:100% 0">0</span></div>
<div class="c r" style="left:1276px;top:718px;width:76px"><span style="transform:scaleX(0.9);transform-origin:100% 0">1</span></div>
<div class="c r" style="left:1355px;top:718px;width:76px"><span style="transform:scaleX(0.9);transform-origin:100% 0">2.5</span></div>
<div class="c r" style="left:1434px;top:718px;width:76px"><span style="transform:scaleX(0.9);transform-origin:100% 0">0</span></div>
<div class="c r" style="left:1513px;top:718px;width:76px"><span style="transform:scaleX(0.9);transform-origin:100% 0">0</span></div>
<div class="c r" style="left:1592px;top:718px;width:76px"><span style="transform:scaleX(0.9);transform-origin:100% 0">4.5</span></div>
<div class="c" style="left:1673px;top:718px;width:222px;overflow:hidden"><span style="transform:scaleX(0.973);transform-origin:0 0">Se termino documentacion y se presento</span></div>
<div class="c r" style="left:23px;top:738px;width:59px"><span style="transform:scaleX(0.9);transform-origin:100% 0">2101</span></div>
<div class="c" style="left:87px;top:738px;width:112px"><span style="transform:scaleX(0.895);transform-origin:0 0">Eber Lara</span></div>
<div class="c" style="left:202px;top:738px;width:149px"><span style="transform:scaleX(0.95);transform-origin:0 0">Ing. en Sistemas</span></div>
<div class="c" style="left:354px;top:738px;width:207px"><span style="transform:scaleX(0.9);transform-origin:0 0">999999991</span></div>
<svg class="tri" style="left:352px;top:738px" width="6" height="6"><polygon points="0,0 6,0 0,6" fill="#1E8F2E"/></svg>
<div class="c" style="left:564px;top:738px;width:238px"><span style="transform:scaleX(0.97);transform-origin:0 0">Sistema Requisiciones</span></div>
<div class="c r" style="left:803px;top:738px;width:107px"><span style="transform:scaleX(0.9);transform-origin:100% 0">28</span></div>
<div class="c r" style="left:913px;top:738px;width:123px"><span style="transform:scaleX(0.9);transform-origin:100% 0">7/11/2025</span></div>
<div class="c r" style="left:1039px;top:738px;width:76px"><span style="transform:scaleX(0.9);transform-origin:100% 0">0</span></div>
<div class="c r" style="left:1118px;top:738px;width:76px"><span style="transform:scaleX(0.9);transform-origin:100% 0">1</span></div>
<div class="c r" style="left:1197px;top:738px;width:76px"><span style="transform:scaleX(0.9);transform-origin:100% 0">0</span></div>
<div class="c r" style="left:1276px;top:738px;width:76px"><span style="transform:scaleX(0.9);transform-origin:100% 0">0</span></div>
<div class="c r" style="left:1355px;top:738px;width:76px"><span style="transform:scaleX(0.9);transform-origin:100% 0">0</span></div>
<div class="c r" style="left:1434px;top:738px;width:76px"><span style="transform:scaleX(0.9);transform-origin:100% 0">0</span></div>
<div class="c r" style="left:1513px;top:738px;width:76px"><span style="transform:scaleX(0.9);transform-origin:100% 0">0</span></div>
<div class="c r" style="left:1592px;top:738px;width:76px"><span style="transform:scaleX(0.9);transform-origin:100% 0">1</span></div>
<div class="c" style="left:1673px;top:738px;width:222px;overflow:hidden"><span style="transform:scaleX(0.973);transform-origin:0 0">se corrigio un bug de ticket doble en</span></div>
<div class="c r" style="left:23px;top:758px;width:59px"><span style="transform:scaleX(0.9);transform-origin:100% 0">2161</span></div>
<div class="c" style="left:87px;top:758px;width:112px"><span style="transform:scaleX(0.895);transform-origin:0 0">Eber Lara</span></div>
<div class="c" style="left:202px;top:758px;width:149px"><span style="transform:scaleX(0.95);transform-origin:0 0">Ing. en Sistemas</span></div>
<div class="c" style="left:354px;top:758px;width:207px"><span style="transform:scaleX(0.9);transform-origin:0 0">999999997</span></div>
<svg class="tri" style="left:352px;top:758px" width="6" height="6"><polygon points="0,0 6,0 0,6" fill="#1E8F2E"/></svg>
<div class="c" style="left:564px;top:758px;width:238px"><span style="transform:scaleX(0.993);transform-origin:0 0">Sistemas de etiquetas, ensamble final</span></div>
<div class="c r" style="left:803px;top:758px;width:107px"><span style="transform:scaleX(0.9);transform-origin:100% 0">29</span></div>
<div class="c r" style="left:913px;top:758px;width:123px"><span style="transform:scaleX(0.9);transform-origin:100% 0">2025-07-17</span></div>
<div class="c r" style="left:1039px;top:758px;width:76px"><span style="transform:scaleX(0.9);transform-origin:100% 0">1</span></div>
<div class="c r" style="left:1118px;top:758px;width:76px"><span style="transform:scaleX(0.9);transform-origin:100% 0">1</span></div>
<div class="c r" style="left:1197px;top:758px;width:76px"><span style="transform:scaleX(0.9);transform-origin:100% 0">1</span></div>
<div class="c r" style="left:1276px;top:758px;width:76px"><span style="transform:scaleX(0.9);transform-origin:100% 0">0</span></div>
<div class="c r" style="left:1355px;top:758px;width:76px"><span style="transform:scaleX(0.9);transform-origin:100% 0">0</span></div>
<div class="c r" style="left:1434px;top:758px;width:76px"><span style="transform:scaleX(0.9);transform-origin:100% 0">0</span></div>
<div class="c r" style="left:1513px;top:758px;width:76px"><span style="transform:scaleX(0.9);transform-origin:100% 0">0</span></div>
<div class="c r" style="left:1592px;top:758px;width:76px"><span style="transform:scaleX(0.9);transform-origin:100% 0">3</span></div>
<div class="c" style="left:1673px;top:758px;width:222px;overflow:hidden"><span style="transform:scaleX(0.973);transform-origin:0 0">se esta trabajando en la pantalla de la</span></div>
<div class="c r" style="left:23px;top:778px;width:59px"><span style="transform:scaleX(0.9);transform-origin:100% 0">2162</span></div>
<div class="c" style="left:87px;top:778px;width:112px"><span style="transform:scaleX(0.895);transform-origin:0 0">Eber Lara</span></div>
<div class="c" style="left:202px;top:778px;width:149px"><span style="transform:scaleX(0.95);transform-origin:0 0">Ing. en Sistemas</span></div>
<div class="c" style="left:354px;top:778px;width:207px"><span style="transform:scaleX(0.9);transform-origin:0 0">999999992</span></div>
<svg class="tri" style="left:352px;top:778px" width="6" height="6"><polygon points="0,0 6,0 0,6" fill="#1E8F2E"/></svg>
<div class="c" style="left:564px;top:778px;width:238px"><span style="transform:scaleX(0.976);transform-origin:0 0">Evaluacion de Proveedores</span></div>
<div class="c r" style="left:803px;top:778px;width:107px"><span style="transform:scaleX(0.9);transform-origin:100% 0">29</span></div>
<div class="c r" style="left:913px;top:778px;width:123px"><span style="transform:scaleX(0.9);transform-origin:100% 0">2025-07-17</span></div>
<div class="c r" style="left:1039px;top:778px;width:76px"><span style="transform:scaleX(0.9);transform-origin:100% 0">2.5</span></div>
<div class="c r" style="left:1118px;top:778px;width:76px"><span style="transform:scaleX(0.9);transform-origin:100% 0">2.5</span></div>
<div class="c r" style="left:1197px;top:778px;width:76px"><span style="transform:scaleX(0.9);transform-origin:100% 0">1</span></div>
<div class="c r" style="left:1276px;top:778px;width:76px"><span style="transform:scaleX(0.9);transform-origin:100% 0">0</span></div>
<div class="c r" style="left:1355px;top:778px;width:76px"><span style="transform:scaleX(0.9);transform-origin:100% 0">0</span></div>
<div class="c r" style="left:1434px;top:778px;width:76px"><span style="transform:scaleX(0.9);transform-origin:100% 0">0</span></div>
<div class="c r" style="left:1513px;top:778px;width:76px"><span style="transform:scaleX(0.9);transform-origin:100% 0">0</span></div>
<div class="c r" style="left:1592px;top:778px;width:76px"><span style="transform:scaleX(0.9);transform-origin:100% 0">6</span></div>
<div class="c" style="left:1673px;top:778px;width:222px;overflow:hidden"><span style="transform:scaleX(0.973);transform-origin:0 0">se hizo la documentacion de evaluacion</span></div>
<div class="c r" style="left:23px;top:798px;width:59px"><span style="transform:scaleX(0.9);transform-origin:100% 0">2163</span></div>
<div class="c" style="left:87px;top:798px;width:112px"><span style="transform:scaleX(0.895);transform-origin:0 0">Eber Lara</span></div>
<div class="c" style="left:202px;top:798px;width:149px"><span style="transform:scaleX(0.95);transform-origin:0 0">Ing. en Sistemas</span></div>
<div class="c" style="left:354px;top:798px;width:207px"><span style="transform:scaleX(0.9);transform-origin:0 0">99999999993</span></div>
<svg class="tri" style="left:352px;top:798px" width="6" height="6"><polygon points="0,0 6,0 0,6" fill="#1E8F2E"/></svg>
<div class="c" style="left:564px;top:798px;width:238px"><span style="transform:scaleX(0.98);transform-origin:0 0">Proyecto Tickets Logistica</span></div>
<div class="c r" style="left:803px;top:798px;width:107px"><span style="transform:scaleX(0.9);transform-origin:100% 0">29</span></div>
<div class="c r" style="left:913px;top:798px;width:123px"><span style="transform:scaleX(0.9);transform-origin:100% 0">2025-07-17</span></div>
<div class="c r" style="left:1039px;top:798px;width:76px"><span style="transform:scaleX(0.9);transform-origin:100% 0">1</span></div>
<div class="c r" style="left:1118px;top:798px;width:76px"><span style="transform:scaleX(0.9);transform-origin:100% 0">2</span></div>
<div class="c r" style="left:1197px;top:798px;width:76px"><span style="transform:scaleX(0.9);transform-origin:100% 0">0</span></div>
<div class="c r" style="left:1276px;top:798px;width:76px"><span style="transform:scaleX(0.9);transform-origin:100% 0">2</span></div>
<div class="c r" style="left:1355px;top:798px;width:76px"><span style="transform:scaleX(0.9);transform-origin:100% 0">2</span></div>
<div class="c r" style="left:1434px;top:798px;width:76px"><span style="transform:scaleX(0.9);transform-origin:100% 0">0</span></div>
<div class="c r" style="left:1513px;top:798px;width:76px"><span style="transform:scaleX(0.9);transform-origin:100% 0">0</span></div>
<div class="c r" style="left:1592px;top:798px;width:76px"><span style="transform:scaleX(0.9);transform-origin:100% 0">7</span></div>
<div class="c" style="left:1673px;top:798px;width:222px;overflow:hidden"><span style="transform:scaleX(0.973);transform-origin:0 0">se hizo cambios de peticiones requeridas</span></div>
<div class="c r" style="left:23px;top:818px;width:59px"><span style="transform:scaleX(0.9);transform-origin:100% 0">2308</span></div>
<div class="c" style="left:87px;top:818px;width:112px"><span style="transform:scaleX(0.895);transform-origin:0 0">Eber Lara</span></div>
<div class="c" style="left:202px;top:818px;width:149px"><span style="transform:scaleX(0.95);transform-origin:0 0">Ing. en Sistemas</span></div>
<div class="c" style="left:354px;top:818px;width:207px"><span style="transform:scaleX(0.9);transform-origin:0 0">999999997</span></div>
<svg class="tri" style="left:352px;top:818px" width="6" height="6"><polygon points="0,0 6,0 0,6" fill="#1E8F2E"/></svg>
<div class="c" style="left:564px;top:818px;width:238px"><span style="transform:scaleX(0.993);transform-origin:0 0">Sistemas de etiquetas, ensamble final</span></div>
<div class="c r" style="left:803px;top:818px;width:107px"><span style="transform:scaleX(0.9);transform-origin:100% 0">30</span></div>
<div class="c r" style="left:913px;top:818px;width:123px"><span style="transform:scaleX(0.9);transform-origin:100% 0">2025-07-23</span></div>
<div class="c r" style="left:1039px;top:818px;width:76px"><span style="transform:scaleX(0.9);transform-origin:100% 0">2</span></div>
<div class="c r" style="left:1118px;top:818px;width:76px"><span style="transform:scaleX(0.9);transform-origin:100% 0">1.5</span></div>
<div class="c r" style="left:1197px;top:818px;width:76px"><span style="transform:scaleX(0.9);transform-origin:100% 0">0</span></div>
<div class="c r" style="left:1276px;top:818px;width:76px"><span style="transform:scaleX(0.9);transform-origin:100% 0">1</span></div>
<div class="c r" style="left:1355px;top:818px;width:76px"><span style="transform:scaleX(0.9);transform-origin:100% 0">1</span></div>
<div class="c r" style="left:1434px;top:818px;width:76px"><span style="transform:scaleX(0.9);transform-origin:100% 0">0</span></div>
<div class="c r" style="left:1513px;top:818px;width:76px"><span style="transform:scaleX(0.9);transform-origin:100% 0">0</span></div>
<div class="c r" style="left:1592px;top:818px;width:76px"><span style="transform:scaleX(0.9);transform-origin:100% 0">5.5</span></div>
<div class="c" style="left:1673px;top:818px;width:222px;overflow:hidden"><span style="transform:scaleX(0.973);transform-origin:0 0">Se esta llevando a cabo el desarollo de</span></div>
<div class="c r" style="left:23px;top:838px;width:59px"><span style="transform:scaleX(0.9);transform-origin:100% 0">2309</span></div>
<div class="c" style="left:87px;top:838px;width:112px"><span style="transform:scaleX(0.895);transform-origin:0 0">Eber Lara</span></div>
<div class="c" style="left:202px;top:838px;width:149px"><span style="transform:scaleX(0.95);transform-origin:0 0">Ing. en Sistemas</span></div>
<div class="c" style="left:354px;top:838px;width:207px"><span style="transform:scaleX(0.9);transform-origin:0 0">99999999993</span></div>
<svg class="tri" style="left:352px;top:838px" width="6" height="6"><polygon points="0,0 6,0 0,6" fill="#1E8F2E"/></svg>
<div class="c" style="left:564px;top:838px;width:238px"><span style="transform:scaleX(0.98);transform-origin:0 0">Proyecto Tickets Logistica</span></div>
<div class="c r" style="left:803px;top:838px;width:107px"><span style="transform:scaleX(0.9);transform-origin:100% 0">30</span></div>
<div class="c r" style="left:913px;top:838px;width:123px"><span style="transform:scaleX(0.9);transform-origin:100% 0">2025-07-23</span></div>
<div class="c r" style="left:1039px;top:838px;width:76px"><span style="transform:scaleX(0.9);transform-origin:100% 0">2.5</span></div>
<div class="c r" style="left:1118px;top:838px;width:76px"><span style="transform:scaleX(0.9);transform-origin:100% 0">0</span></div>
<div class="c r" style="left:1197px;top:838px;width:76px"><span style="transform:scaleX(0.9);transform-origin:100% 0">0</span></div>
<div class="c r" style="left:1276px;top:838px;width:76px"><span style="transform:scaleX(0.9);transform-origin:100% 0">2.5</span></div>
<div class="c r" style="left:1355px;top:838px;width:76px"><span style="transform:scaleX(0.9);transform-origin:100% 0">2.5</span></div>
<div class="c r" style="left:1434px;top:838px;width:76px"><span style="transform:scaleX(0.9);transform-origin:100% 0">0</span></div>
<div class="c r" style="left:1513px;top:838px;width:76px"><span style="transform:scaleX(0.9);transform-origin:100% 0">0</span></div>
<div class="c r" style="left:1592px;top:838px;width:76px"><span style="transform:scaleX(0.9);transform-origin:100% 0">7.5</span></div>
<div class="c" style="left:1673px;top:838px;width:222px;overflow:hidden"><span style="transform:scaleX(0.973);transform-origin:0 0">se trabajo en la entrega de desarollo</span></div>
<div class="c r" style="left:23px;top:858px;width:59px"><span style="transform:scaleX(0.9);transform-origin:100% 0">2433</span></div>
<div class="c" style="left:87px;top:858px;width:112px"><span style="transform:scaleX(0.895);transform-origin:0 0">Eber Lara</span></div>
<div class="c" style="left:202px;top:858px;width:149px"><span style="transform:scaleX(0.95);transform-origin:0 0">Ing. en Sistemas</span></div>
<div class="c" style="left:354px;top:858px;width:207px"><span style="transform:scaleX(0.9);transform-origin:0 0">999999991</span></div>
<svg class="tri" style="left:352px;top:858px" width="6" height="6"><polygon points="0,0 6,0 0,6" fill="#1E8F2E"/></svg>
<div class="c" style="left:564px;top:858px;width:238px"><span style="transform:scaleX(0.97);transform-origin:0 0">Sistema Requisiciones</span></div>
<div class="c r" style="left:803px;top:858px;width:107px"><span style="transform:scaleX(0.9);transform-origin:100% 0">31</span></div>
<div class="c r" style="left:913px;top:858px;width:123px"><span style="transform:scaleX(0.9);transform-origin:100% 0">2025-07-30</span></div>
<div class="c r" style="left:1039px;top:858px;width:76px"><span style="transform:scaleX(0.9);transform-origin:100% 0">1</span></div>
<div class="c r" style="left:1118px;top:858px;width:76px"><span style="transform:scaleX(0.9);transform-origin:100% 0">0</span></div>
<div class="c r" style="left:1197px;top:858px;width:76px"><span style="transform:scaleX(0.9);transform-origin:100% 0">0</span></div>
<div class="c r" style="left:1276px;top:858px;width:76px"><span style="transform:scaleX(0.9);transform-origin:100% 0">0</span></div>
<div class="c r" style="left:1355px;top:858px;width:76px"><span style="transform:scaleX(0.9);transform-origin:100% 0">0</span></div>
<div class="c r" style="left:1434px;top:858px;width:76px"><span style="transform:scaleX(0.9);transform-origin:100% 0">0</span></div>
<div class="c r" style="left:1513px;top:858px;width:76px"><span style="transform:scaleX(0.9);transform-origin:100% 0">0</span></div>
<div class="c r" style="left:1592px;top:858px;width:76px"><span style="transform:scaleX(0.9);transform-origin:100% 0">1</span></div>
<div class="c" style="left:1673px;top:858px;width:222px;overflow:hidden"><span style="transform:scaleX(0.973);transform-origin:0 0">Se agrego documentacion en el puerto</span></div>
<div class="c r" style="left:23px;top:878px;width:59px"><span style="transform:scaleX(0.9);transform-origin:100% 0">2434</span></div>
<div class="c" style="left:87px;top:878px;width:112px"><span style="transform:scaleX(0.895);transform-origin:0 0">Eber Lara</span></div>
<div class="c" style="left:202px;top:878px;width:149px"><span style="transform:scaleX(0.95);transform-origin:0 0">Ing. en Sistemas</span></div>
<div class="c" style="left:354px;top:878px;width:207px"><span style="transform:scaleX(0.9);transform-origin:0 0">999999997</span></div>
<svg class="tri" style="left:352px;top:878px" width="6" height="6"><polygon points="0,0 6,0 0,6" fill="#1E8F2E"/></svg>
<div class="c" style="left:564px;top:878px;width:238px"><span style="transform:scaleX(0.993);transform-origin:0 0">Sistemas de etiquetas, ensamble final</span></div>
<div class="c r" style="left:803px;top:878px;width:107px"><span style="transform:scaleX(0.9);transform-origin:100% 0">31</span></div>
<div class="c r" style="left:913px;top:878px;width:123px"><span style="transform:scaleX(0.9);transform-origin:100% 0">2025-07-30</span></div>
<div class="c r" style="left:1039px;top:878px;width:76px"><span style="transform:scaleX(0.9);transform-origin:100% 0">1</span></div>
<div class="c r" style="left:1118px;top:878px;width:76px"><span style="transform:scaleX(0.9);transform-origin:100% 0">1</span></div>
<div class="c r" style="left:1197px;top:878px;width:76px"><span style="transform:scaleX(0.9);transform-origin:100% 0">1</span></div>
<div class="c r" style="left:1276px;top:878px;width:76px"><span style="transform:scaleX(0.9);transform-origin:100% 0">1</span></div>
<div class="c r" style="left:1355px;top:878px;width:76px"><span style="transform:scaleX(0.9);transform-origin:100% 0">1</span></div>
<div class="c r" style="left:1434px;top:878px;width:76px"><span style="transform:scaleX(0.9);transform-origin:100% 0">0</span></div>
<div class="c r" style="left:1513px;top:878px;width:76px"><span style="transform:scaleX(0.9);transform-origin:100% 0">0</span></div>
<div class="c r" style="left:1592px;top:878px;width:76px"><span style="transform:scaleX(0.9);transform-origin:100% 0">5</span></div>
<div class="c" style="left:1673px;top:878px;width:222px;overflow:hidden"><span style="transform:scaleX(0.973);transform-origin:0 0">Se esta trabajado en el proyecto ya se</span></div>
<div class="c r" style="left:23px;top:898px;width:59px"><span style="transform:scaleX(0.9);transform-origin:100% 0">2435</span></div>
<div class="c" style="left:87px;top:898px;width:112px"><span style="transform:scaleX(0.895);transform-origin:0 0">Eber Lara</span></div>
<div class="c" style="left:202px;top:898px;width:149px"><span style="transform:scaleX(0.95);transform-origin:0 0">Ing. en Sistemas</span></div>
<div class="c" style="left:354px;top:898px;width:207px"><span style="transform:scaleX(0.9);transform-origin:0 0">99999999993</span></div>
<svg class="tri" style="left:352px;top:898px" width="6" height="6"><polygon points="0,0 6,0 0,6" fill="#1E8F2E"/></svg>
<div class="c" style="left:564px;top:898px;width:238px"><span style="transform:scaleX(0.98);transform-origin:0 0">Proyecto Tickets Logistica</span></div>
<div class="c r" style="left:803px;top:898px;width:107px"><span style="transform:scaleX(0.9);transform-origin:100% 0">31</span></div>
<div class="c r" style="left:913px;top:898px;width:123px"><span style="transform:scaleX(0.9);transform-origin:100% 0">2025-07-30</span></div>
<div class="c r" style="left:1039px;top:898px;width:76px"><span style="transform:scaleX(0.9);transform-origin:100% 0">2</span></div>
<div class="c r" style="left:1118px;top:898px;width:76px"><span style="transform:scaleX(0.9);transform-origin:100% 0">0</span></div>
<div class="c r" style="left:1197px;top:898px;width:76px"><span style="transform:scaleX(0.9);transform-origin:100% 0">0</span></div>
<div class="c r" style="left:1276px;top:898px;width:76px"><span style="transform:scaleX(0.9);transform-origin:100% 0">0</span></div>
<div class="c r" style="left:1355px;top:898px;width:76px"><span style="transform:scaleX(0.9);transform-origin:100% 0">0</span></div>
<div class="c r" style="left:1434px;top:898px;width:76px"><span style="transform:scaleX(0.9);transform-origin:100% 0">0</span></div>
<div class="c r" style="left:1513px;top:898px;width:76px"><span style="transform:scaleX(0.9);transform-origin:100% 0">0</span></div>
<div class="c r" style="left:1592px;top:898px;width:76px"><span style="transform:scaleX(0.9);transform-origin:100% 0">2</span></div>
<div class="c" style="left:1673px;top:898px;width:222px;overflow:hidden"><span style="transform:scaleX(0.973);transform-origin:0 0">Se actualizo base de datos para agregar</span></div>
<div class="c r" style="left:23px;top:918px;width:59px"><span style="transform:scaleX(0.9);transform-origin:100% 0">2436</span></div>
<div class="c" style="left:87px;top:918px;width:112px"><span style="transform:scaleX(0.895);transform-origin:0 0">Eber Lara</span></div>
<div class="c" style="left:202px;top:918px;width:149px"><span style="transform:scaleX(0.95);transform-origin:0 0">Ing. en Sistemas</span></div>
<div class="c" style="left:354px;top:918px;width:207px"><span style="transform:scaleX(0.9);transform-origin:0 0">999999993</span></div>
<svg class="tri" style="left:352px;top:918px" width="6" height="6"><polygon points="0,0 6,0 0,6" fill="#1E8F2E"/></svg>
<div class="c" style="left:564px;top:918px;width:238px"><span style="transform:scaleX(0.966);transform-origin:0 0">Sistema Tickets</span></div>
<div class="c r" style="left:803px;top:918px;width:107px"><span style="transform:scaleX(0.9);transform-origin:100% 0">31</span></div>
<div class="c r" style="left:913px;top:918px;width:123px"><span style="transform:scaleX(0.9);transform-origin:100% 0">2025-07-30</span></div>
<div class="c r" style="left:1039px;top:918px;width:76px"><span style="transform:scaleX(0.9);transform-origin:100% 0">3</span></div>
<div class="c r" style="left:1118px;top:918px;width:76px"><span style="transform:scaleX(0.9);transform-origin:100% 0">2</span></div>
<div class="c r" style="left:1197px;top:918px;width:76px"><span style="transform:scaleX(0.9);transform-origin:100% 0">2</span></div>
<div class="c r" style="left:1276px;top:918px;width:76px"><span style="transform:scaleX(0.9);transform-origin:100% 0">0</span></div>
<div class="c r" style="left:1355px;top:918px;width:76px"><span style="transform:scaleX(0.9);transform-origin:100% 0">0</span></div>
<div class="c r" style="left:1434px;top:918px;width:76px"><span style="transform:scaleX(0.9);transform-origin:100% 0">0</span></div>
<div class="c r" style="left:1513px;top:918px;width:76px"><span style="transform:scaleX(0.9);transform-origin:100% 0">0</span></div>
<div class="c r" style="left:1592px;top:918px;width:76px"><span style="transform:scaleX(0.9);transform-origin:100% 0">7</span></div>
<div class="c" style="left:1673px;top:918px;width:222px;overflow:hidden"><span style="transform:scaleX(0.973);transform-origin:0 0">se hizieron cambios se agrego la parte</span></div>
<div class="c r" style="left:23px;top:938px;width:59px"><span style="transform:scaleX(0.9);transform-origin:100% 0">2505</span></div>
<div class="c" style="left:87px;top:938px;width:112px"><span style="transform:scaleX(0.895);transform-origin:0 0">Eber Lara</span></div>
<div class="c" style="left:202px;top:938px;width:149px"><span style="transform:scaleX(0.95);transform-origin:0 0">Ing. en Sistemas</span></div>
<div class="c" style="left:354px;top:938px;width:207px"><span style="transform:scaleX(0.9);transform-origin:0 0">99999999997</span></div>
<svg class="tri" style="left:352px;top:938px" width="6" height="6"><polygon points="0,0 6,0 0,6" fill="#1E8F2E"/></svg>
<div class="c" style="left:564px;top:938px;width:238px"><span style="transform:scaleX(0.997);transform-origin:0 0">Proyecto Alta de proveedores</span></div>
<div class="c r" style="left:803px;top:938px;width:107px"><span style="transform:scaleX(0.9);transform-origin:100% 0">32</span></div>
<div class="c r" style="left:913px;top:938px;width:123px"><span style="transform:scaleX(0.9);transform-origin:100% 0">2025-08-06</span></div>
<div class="c r" style="left:1039px;top:938px;width:76px"><span style="transform:scaleX(0.9);transform-origin:100% 0">2.5</span></div>
<div class="c r" style="left:1118px;top:938px;width:76px"><span style="transform:scaleX(0.9);transform-origin:100% 0">2.5</span></div>
<div class="c r" style="left:1197px;top:938px;width:76px"><span style="transform:scaleX(0.9);transform-origin:100% 0">2.5</span></div>
<div class="c r" style="left:1276px;top:938px;width:76px"><span style="transform:scaleX(0.9);transform-origin:100% 0">0</span></div>
<div class="c r" style="left:1355px;top:938px;width:76px"><span style="transform:scaleX(0.9);transform-origin:100% 0">0</span></div>
<div class="c r" style="left:1434px;top:938px;width:76px"><span style="transform:scaleX(0.9);transform-origin:100% 0">0</span></div>
<div class="c r" style="left:1513px;top:938px;width:76px"><span style="transform:scaleX(0.9);transform-origin:100% 0">0</span></div>
<div class="c r" style="left:1592px;top:938px;width:76px"><span style="transform:scaleX(0.9);transform-origin:100% 0">7.5</span></div>
<div class="c" style="left:1673px;top:938px;width:222px;overflow:hidden"><span style="transform:scaleX(0.973);transform-origin:0 0">Se inicio el desarollo de alta de proveedores</span></div>
<svg class="tri" style="left:352px;top:958px" width="6" height="6"><polygon points="0,0 6,0 0,6" fill="#1E8F2E"/></svg>
<div style="position:absolute;left:83px;top:316px;width:113px;height:18px;border:2px solid #217346"></div>
<div style="position:absolute;left:196px;top:334px;width:6px;height:6px;background:#217346;border:1px solid #fff;box-sizing:border-box"></div>
<!-- SCROLLBAR -->
<div class="a" style="left:1896px;top:238px;width:21px;height:723px;background:#E6E6E6"></div>
<div class="a" style="left:1899px;top:255px;width:15px;height:706px;background:#D4D4D4"></div>
<div class="a" style="left:1899px;top:240px;width:13px;height:13px;background:#fff;border:1px solid #ABABAB"></div>
<svg class="a" style="left:1902px;top:244px" width="9" height="6"><path d="M0.5 5 H8.5 L4.5 1Z" fill="#666"/></svg>
<div class="a" style="left:1899px;top:256px;width:13px;height:251px;background:#fff;border:1px solid #ABABAB"></div>
</body></html>
